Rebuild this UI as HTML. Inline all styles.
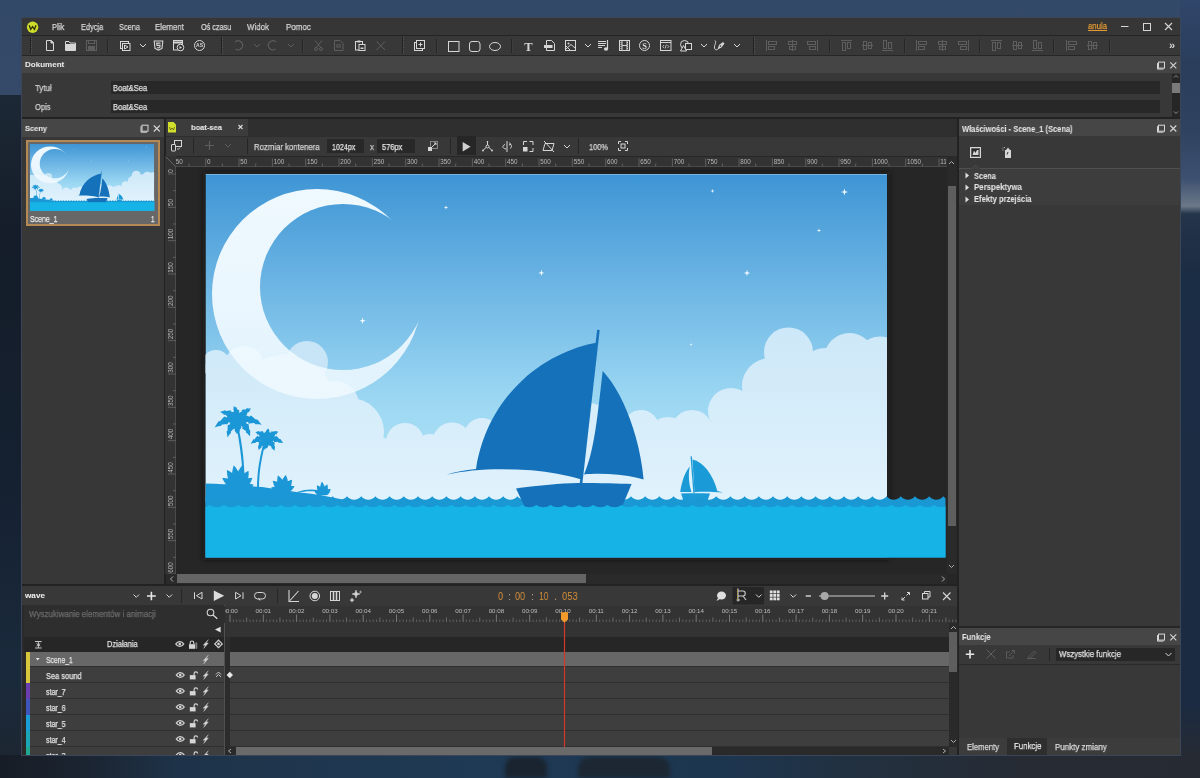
<!DOCTYPE html>
<html><head><meta charset="utf-8">
<style>
*{margin:0;padding:0;box-sizing:border-box}
html,body{width:1200px;height:778px;overflow:hidden}
body{position:relative;font-family:"Liberation Sans",sans-serif;font-size:8px;color:#d6d6d6;
background:linear-gradient(180deg,#2f4a6e 0%,#2a4163 20%,#1d2d42 40%,#172536 70%,#1b2a3c 100%)}
.a{position:absolute}
.t{position:absolute;white-space:nowrap;line-height:10px;will-change:transform;transform-origin:0 0;-webkit-text-stroke:0.25px currentColor}
.b{font-weight:bold}
svg{position:absolute;overflow:visible;will-change:transform}
</style></head><body>

<!-- desktop bg -->
<div class="a" style="left:0;top:0;width:1200px;height:778px;background:linear-gradient(180deg,#334968 0%,#354a69 12%,#2d405c 25%,#1e3048 40%,#1b2c42 100%)"></div>
<div class="a" style="left:0;top:95px;width:22px;height:683px;background:linear-gradient(180deg,#1d2836 0%,#141d29 20%,#152030 55%,#1a2a3c 85%,#1e2530 100%)"></div>
<div class="a" style="left:1180px;top:0;width:20px;height:778px;background:linear-gradient(180deg,#30466a 0%,#2a3e5c 8%,#2f4360 17%,#3e5070 23%,#5e6d82 25.5%,#6a7888 26.5%,#243449 27.5%,#1b2d44 35%,#1a2b42 90%,#262a34 97%)"></div>
<div class="a" style="left:0;top:755px;width:1200px;height:23px;background:linear-gradient(90deg,#171d26 0%,#1b2431 7%,#1e3349 15%,#1f3a55 40%,#1d3650 60%,#22303f 72%,#262b34 85%,#252a33 100%)"></div>
<div class="a" style="left:505px;top:757px;width:42px;height:21px;background:#1a2430;border-radius:10px 10px 0 0;filter:blur(2px)"></div>
<div class="a" style="left:578px;top:757px;width:92px;height:21px;background:#1c2733;border-radius:12px 12px 0 0;filter:blur(2px)"></div>
<!-- window frame -->
<div class="a" style="left:21px;top:17px;width:1160px;height:739px;background:#3a4658"></div>
<div class="a" style="left:22px;top:18px;width:1158px;height:737px;background:#222"></div>
<!-- menubar -->
<div class="a" style="left:22px;top:18px;width:1158px;height:17px;background:#363636"></div>
<div class="a" style="left:22px;top:35px;width:1158px;height:1px;background:#242424"></div>
<!-- toolbar -->
<div class="a" style="left:22px;top:36px;width:1158px;height:20px;background:#383838"></div>

<div class="a" style="left:22px;top:55px;width:1158px;height:1px;background:#262626"></div>
<!-- Dokument panel -->
<div class="a" style="left:22px;top:56px;width:1158px;height:17px;background:#454545"></div>
<div class="a" style="left:22px;top:73px;width:1158px;height:44px;background:#383838"></div>

<!-- Sceny panel -->
<div class="a" style="left:22px;top:119px;width:142px;height:18px;background:#464646"></div>
<div class="a" style="left:22px;top:137px;width:142px;height:447px;background:#373737"></div>

<!-- center doc -->
<div class="a" style="left:166px;top:119px;width:791px;height:17px;background:#2f2f2f"></div>
<div class="a" style="left:166px;top:136px;width:791px;height:20px;background:#383838"></div>
<div class="a" style="left:166px;top:156px;width:791px;height:428px;background:#262626"></div>

<!-- right panel -->
<div class="a" style="left:959px;top:119px;width:221px;height:17px;background:#464646"></div>
<div class="a" style="left:959px;top:136px;width:221px;height:490px;background:#383838"></div>
<div class="a" style="left:959px;top:628px;width:221px;height:17px;background:#464646"></div>
<div class="a" style="left:959px;top:645px;width:221px;height:110px;background:#383838"></div>

<!-- timeline -->
<div class="a" style="left:22px;top:586px;width:935px;height:20px;background:#383838"></div>
<div class="a" style="left:22px;top:606px;width:935px;height:149px;background:#373737"></div>


<!-- menu text -->
<!-- Dokument -->
<div class="a" style="left:111px;top:81px;width:1049px;height:13px;background:#282828"></div>
<div class="a" style="left:111px;top:100px;width:1049px;height:13px;background:#282828"></div>
<div class="a" style="left:1172px;top:74px;width:8px;height:43px;background:#262626"></div>
<div class="a" style="left:1172px;top:83px;width:8px;height:10px;background:#7a7a7a"></div>
<!-- Sceny -->
<!-- Wlasciwosci -->

<!-- toolbar icons -->
<svg class="a" style="left:0;top:0" width="1200" height="778" viewBox="0 0 1200 778"><line x1="30.5" y1="37" x2="30.5" y2="54" stroke="#222"/><line x1="31.5" y1="37" x2="31.5" y2="54" stroke="#555" stroke-dasharray="1 1"/><g transform="translate(46,40)"><path d="M0.5,0.5 H5.5 L7.5,2.5 V10.5 H0.5 Z" fill="none" stroke="#d6d6d6"/><path d="M5,0.5 V3 H7.5" fill="#d6d6d6" stroke="#d6d6d6"/></g><g transform="translate(65,41)"><path d="M0.5,0.5 H4 L5,2 H10.5 V9.5 H0.5 Z" fill="none" stroke="#d6d6d6"/><rect x="1" y="3" width="9.5" height="6.5" fill="#d6d6d6"/></g><g transform="translate(86,40)"><rect x="0.5" y="0.5" width="10" height="10" fill="none" stroke="#5e5e5e"/><rect x="2.5" y="0.5" width="6" height="3" fill="none" stroke="#5e5e5e"/><rect x="2" y="6" width="7" height="4.5" fill="#5e5e5e"/></g><line x1="107.5" y1="39" x2="107.5" y2="53" stroke="#262626"/><line x1="108.5" y1="39" x2="108.5" y2="53" stroke="#3d3d3d"/><g transform="translate(120,41)"><rect x="0.5" y="0.5" width="8" height="7" fill="none" stroke="#d6d6d6"/><rect x="2.5" y="2.5" width="7.5" height="7" fill="#333" stroke="#d6d6d6"/><path d="M4.5,4 L8,6 L4.5,8 Z" fill="none" stroke="#d6d6d6"/></g><polyline points="140,44 143,47 146,44" fill="none" stroke="#d6d6d6" stroke-width="1"/><g transform="translate(153.5,40.5)"><path d="M0.7,0.5 H9.3 L8.5,8 L5,9.6 L1.5,8 Z" fill="none" stroke="#d6d6d6" stroke-width="1.1"/><path d="M7,2.6 H3.2 L3.5,4.9 H6.6 L6.3,6.9 L5,7.4 L3.7,6.9" fill="none" stroke="#d6d6d6" stroke-width="1.1"/></g><g transform="translate(173,40)"><rect x="0.5" y="0.5" width="9" height="9.5" fill="none" stroke="#d6d6d6"/><line x1="0.5" y1="2.5" x2="9.5" y2="2.5" stroke="#d6d6d6" stroke-width="2"/><circle cx="7.5" cy="7.5" r="3.3" fill="#333" stroke="#d6d6d6"/><path d="M6.5,6 L9,7.5 L6.5,9 Z" fill="#d6d6d6"/></g><g transform="translate(194,40)"><circle cx="5.5" cy="5.5" r="5" fill="none" stroke="#d6d6d6"/><text x="5.5" y="7.3" font-size="5" font-weight="bold" fill="#d6d6d6" text-anchor="middle" font-family="Liberation Sans">AS</text></g><line x1="221.5" y1="37" x2="221.5" y2="54" stroke="#222"/><line x1="222.5" y1="37" x2="222.5" y2="54" stroke="#555" stroke-dasharray="1 1"/><g transform="translate(233,40)"><path d="M2,2 A4.5,4.5 0 1 1 2.5,9" fill="none" stroke="#5e5e5e" stroke-width="1.1"/></g><polyline points="254,44 257,47 260,44" fill="none" stroke="#5e5e5e" stroke-width="1"/><g transform="translate(267,40)"><path d="M9,2 A4.5,4.5 0 1 0 8.5,9" fill="none" stroke="#5e5e5e" stroke-width="1.1"/></g><polyline points="288,44 291,47 294,44" fill="none" stroke="#5e5e5e" stroke-width="1"/><line x1="302.5" y1="39" x2="302.5" y2="53" stroke="#262626"/><line x1="303.5" y1="39" x2="303.5" y2="53" stroke="#3d3d3d"/><g transform="translate(314,40)"><path d="M1,0.5 L7,8 M8,0.5 L2,8" stroke="#5e5e5e" fill="none"/><circle cx="2" cy="9" r="1.5" fill="none" stroke="#5e5e5e"/><circle cx="7" cy="9" r="1.5" fill="none" stroke="#5e5e5e"/></g><g transform="translate(334,40)"><path d="M0.5,0.5 H6 L9,3.5 V10.5 H0.5 Z" fill="none" stroke="#5e5e5e"/><path d="M2,5 H7 M2,7 H7" stroke="#5e5e5e"/></g><g transform="translate(355,40)"><rect x="0.5" y="1.5" width="7" height="8.5" fill="none" stroke="#d6d6d6"/><rect x="2.5" y="0.5" width="3" height="2" fill="#d6d6d6"/><rect x="4" y="4.5" width="6" height="6" fill="#333" stroke="#d6d6d6"/><rect x="5.5" y="7.5" width="3" height="1.5" fill="#d6d6d6"/></g><g transform="translate(376,41)"><path d="M0.5,0.5 L9,9 M9,0.5 L0.5,9" stroke="#5e5e5e"/></g><line x1="402.5" y1="37" x2="402.5" y2="54" stroke="#222"/><line x1="403.5" y1="37" x2="403.5" y2="54" stroke="#555" stroke-dasharray="1 1"/><g transform="translate(414,40)"><rect x="0.5" y="2.5" width="8" height="8" fill="none" stroke="#d6d6d6"/><rect x="2.5" y="0.5" width="8" height="8" fill="#333" stroke="#d6d6d6"/><path d="M6.5,2.5 V6.5 M4.5,4.5 H8.5" stroke="#d6d6d6"/></g><line x1="436.5" y1="39" x2="436.5" y2="53" stroke="#262626"/><line x1="437.5" y1="39" x2="437.5" y2="53" stroke="#3d3d3d"/><g transform="translate(448,41)"><rect x="0.5" y="0.5" width="10.5" height="10" fill="none" stroke="#d6d6d6"/></g><g transform="translate(469,41)"><rect x="0.5" y="0.5" width="10.5" height="10" rx="2.5" fill="none" stroke="#d6d6d6"/></g><g transform="translate(489,42)"><ellipse cx="6" cy="4.5" rx="5.5" ry="4" fill="none" stroke="#d6d6d6"/></g><line x1="511.5" y1="39" x2="511.5" y2="53" stroke="#262626"/><line x1="512.5" y1="39" x2="512.5" y2="53" stroke="#3d3d3d"/><text x="528.5" y="51" font-size="12.5" font-family="Liberation Serif" font-weight="bold" fill="#d6d6d6" text-anchor="middle">T</text><g transform="translate(544,40)"><path d="M2.5,0.5 H7.5 L10.5,3.5 V10.5 H2.5 Z" fill="none" stroke="#d6d6d6"/><rect x="0" y="5" width="8.5" height="3" fill="#d6d6d6"/></g><g transform="translate(565,40)"><rect x="0.5" y="0.5" width="10" height="10" fill="none" stroke="#d6d6d6"/><circle cx="3.5" cy="3.5" r="1" fill="#d6d6d6"/><path d="M1,9 L6,4.5 L10,8 M1,6 L5,10" fill="none" stroke="#d6d6d6"/></g><polyline points="585,44 588,47 591,44" fill="none" stroke="#d6d6d6" stroke-width="1"/><g transform="translate(598,40)"><path d="M0,1.5 H8 M0,3.5 H8 M0,5.5 H7 M0,7.5 H4" stroke="#d6d6d6"/><path d="M9.5,0 V9" stroke="#d6d6d6" stroke-width="1.2"/><ellipse cx="8" cy="9" rx="2.2" ry="1.8" fill="#d6d6d6"/></g><g transform="translate(619,40)"><rect x="0.5" y="0.5" width="10" height="10" fill="none" stroke="#d6d6d6"/><path d="M3,0.5 V10.5 M8,0.5 V10.5 M3,5.5 H8" stroke="#d6d6d6"/><path d="M0.5,2.5 H3 M0.5,4.5 H3 M0.5,6.5 H3 M0.5,8.5 H3 M8,2.5 H10.5 M8,4.5 H10.5 M8,6.5 H10.5 M8,8.5 H10.5" stroke="#d6d6d6" stroke-dasharray="1 1"/></g><g transform="translate(639,40)"><circle cx="5.5" cy="5.5" r="5" fill="none" stroke="#d6d6d6"/><text x="5.5" y="8.6" font-size="8.5" font-weight="bold" font-family="Liberation Serif" fill="#d6d6d6" text-anchor="middle">S</text></g><g transform="translate(660,40)"><rect x="0.5" y="0.5" width="10.5" height="10" fill="none" stroke="#d6d6d6"/><path d="M0.5,2.5 H11" stroke="#d6d6d6"/><path d="M4,5 L2.7,6.5 L4,8 M7.5,5 L8.8,6.5 L7.5,8 M6.3,4.5 L5.2,8.5" fill="none" stroke="#d6d6d6" stroke-width="0.8"/></g><g transform="translate(680,40)"><circle cx="4.5" cy="4.5" r="4" fill="none" stroke="#d6d6d6"/><rect x="5.5" y="3.5" width="6" height="6" fill="#333" stroke="#d6d6d6"/><path d="M0.5,11 L3.5,5.5 L6.5,11 Z" fill="#333" stroke="#d6d6d6"/></g><polyline points="701,44 704,47 707,44" fill="none" stroke="#d6d6d6" stroke-width="1"/><g transform="translate(713,40)"><path d="M2,0.5 C4,2 1,5 1.5,8 C2,10.5 4,10 5,9" fill="none" stroke="#d6d6d6"/><path d="M4.5,9.5 L6,5 L10,2 L11.5,3.5 L8.5,7.5 Z" fill="#d6d6d6"/><circle cx="7.5" cy="6" r="0.8" fill="#333"/></g><polyline points="734,44 737,47 740,44" fill="none" stroke="#d6d6d6" stroke-width="1"/><line x1="753.5" y1="37" x2="753.5" y2="54" stroke="#222"/><line x1="754.5" y1="37" x2="754.5" y2="54" stroke="#555" stroke-dasharray="1 1"/><g transform="translate(766,40)"><path d="M0.5,0 V11" stroke="#5e5e5e"/><rect x="2.5" y="1.5" width="8" height="3" fill="none" stroke="#5e5e5e"/><rect x="2.5" y="6.5" width="6" height="3" fill="none" stroke="#5e5e5e"/></g><g transform="translate(787,40)"><path d="M5.5,0 V11" stroke="#5e5e5e"/><rect x="1.5" y="1.5" width="8" height="3" fill="none" stroke="#5e5e5e"/><rect x="2.5" y="6.5" width="6" height="3" fill="none" stroke="#5e5e5e"/></g><g transform="translate(807,40)"><path d="M10.5,0 V11" stroke="#5e5e5e"/><rect x="0.5" y="1.5" width="8" height="3" fill="none" stroke="#5e5e5e"/><rect x="2.5" y="6.5" width="6" height="3" fill="none" stroke="#5e5e5e"/></g><line x1="829.5" y1="39" x2="829.5" y2="53" stroke="#262626"/><line x1="830.5" y1="39" x2="830.5" y2="53" stroke="#3d3d3d"/><g transform="translate(841,40)"><path d="M0,0.5 H11" stroke="#5e5e5e"/><rect x="1.5" y="2.5" width="3" height="8" fill="none" stroke="#5e5e5e"/><rect x="6.5" y="2.5" width="3" height="6" fill="none" stroke="#5e5e5e"/></g><g transform="translate(862,40)"><path d="M0,5.5 H11" stroke="#5e5e5e"/><rect x="1.5" y="1.5" width="3" height="8" fill="none" stroke="#5e5e5e"/><rect x="6.5" y="2.5" width="3" height="6" fill="none" stroke="#5e5e5e"/></g><g transform="translate(882,40)"><path d="M0,10.5 H11" stroke="#5e5e5e"/><rect x="1.5" y="0.5" width="3" height="8" fill="none" stroke="#5e5e5e"/><rect x="6.5" y="2.5" width="3" height="6" fill="none" stroke="#5e5e5e"/></g><line x1="904.5" y1="39" x2="904.5" y2="53" stroke="#262626"/><line x1="905.5" y1="39" x2="905.5" y2="53" stroke="#3d3d3d"/><g transform="translate(916,40)"><path d="M0.5,0 V11" stroke="#5e5e5e"/><rect x="2.5" y="1.5" width="8" height="3" fill="none" stroke="#5e5e5e"/><rect x="2.5" y="6.5" width="6" height="3" fill="none" stroke="#5e5e5e"/></g><g transform="translate(937,40)"><path d="M5.5,0 V11" stroke="#5e5e5e"/><rect x="1.5" y="1.5" width="8" height="3" fill="none" stroke="#5e5e5e"/><rect x="2.5" y="6.5" width="6" height="3" fill="none" stroke="#5e5e5e"/></g><g transform="translate(958,40)"><path d="M10.5,0 V11" stroke="#5e5e5e"/><rect x="0.5" y="1.5" width="8" height="3" fill="none" stroke="#5e5e5e"/><rect x="2.5" y="6.5" width="6" height="3" fill="none" stroke="#5e5e5e"/></g><line x1="979.5" y1="39" x2="979.5" y2="53" stroke="#262626"/><line x1="980.5" y1="39" x2="980.5" y2="53" stroke="#3d3d3d"/><g transform="translate(991,40)"><path d="M0,0.5 H11" stroke="#5e5e5e"/><rect x="1.5" y="2.5" width="3" height="8" fill="none" stroke="#5e5e5e"/><rect x="6.5" y="2.5" width="3" height="6" fill="none" stroke="#5e5e5e"/></g><g transform="translate(1012,40)"><path d="M0,5.5 H11" stroke="#5e5e5e"/><rect x="1.5" y="1.5" width="3" height="8" fill="none" stroke="#5e5e5e"/><rect x="6.5" y="2.5" width="3" height="6" fill="none" stroke="#5e5e5e"/></g><g transform="translate(1032,40)"><path d="M0,10.5 H11" stroke="#5e5e5e"/><rect x="1.5" y="0.5" width="3" height="8" fill="none" stroke="#5e5e5e"/><rect x="6.5" y="2.5" width="3" height="6" fill="none" stroke="#5e5e5e"/></g><line x1="1053.5" y1="39" x2="1053.5" y2="53" stroke="#262626"/><line x1="1054.5" y1="39" x2="1054.5" y2="53" stroke="#3d3d3d"/><g transform="translate(1066,40)"><path d="M0.5,0 V11" stroke="#5e5e5e"/><rect x="2.5" y="1.5" width="8" height="3" fill="none" stroke="#5e5e5e"/><rect x="2.5" y="6.5" width="6" height="3" fill="none" stroke="#5e5e5e"/></g><g transform="translate(1087,40)"><path d="M0,5.5 H11" stroke="#5e5e5e"/><rect x="1.5" y="1.5" width="3" height="8" fill="none" stroke="#5e5e5e"/><rect x="6.5" y="2.5" width="3" height="6" fill="none" stroke="#5e5e5e"/></g><line x1="1109.5" y1="39" x2="1109.5" y2="53" stroke="#262626"/><line x1="1110.5" y1="39" x2="1110.5" y2="53" stroke="#3d3d3d"/><text x="1169" y="49" font-size="11" font-weight="bold" fill="#d6d6d6" font-family="Liberation Sans">»</text><circle cx="32.6" cy="27.2" r="5.7" fill="#cfdd2b"/><path d="M29.2,25.2 L30.7,29.3 L32.6,26.6 L34.5,29.3 L36,25.2" fill="none" stroke="#2e300c" stroke-width="1.3"/><path d="M1121,26.5 H1128.5" stroke="#d6d6d6"/><rect x="1143.5" y="23.5" width="7" height="7" fill="none" stroke="#d6d6d6"/><path d="M1165,23 L1172,30 M1172,23 L1165,30" stroke="#d6d6d6" stroke-width="1.1"/></svg>

<svg class="a" style="left:0;top:0" width="1200" height="778" viewBox="0 0 1200 778"><defs>
<linearGradient id="sky" x1="0" y1="174" x2="0" y2="450" gradientUnits="userSpaceOnUse">
<stop offset="0" stop-color="#3e95d4"/><stop offset="0.4" stop-color="#6cb5e4"/><stop offset="0.8" stop-color="#9ad6f2"/><stop offset="1" stop-color="#aadff5"/></linearGradient>
<linearGradient id="cloud" x1="0" y1="330" x2="0" y2="500" gradientUnits="userSpaceOnUse">
<stop offset="0" stop-color="#cde8f8"/><stop offset="1" stop-color="#e0f2fc"/></linearGradient>
<linearGradient id="moongrad" x1="0" y1="189" x2="0" y2="399" gradientUnits="userSpaceOnUse"><stop offset="0" stop-color="#f3fbff" stop-opacity="0.98"/><stop offset="0.55" stop-color="#f2faff" stop-opacity="0.94"/><stop offset="1" stop-color="#f0f9ff" stop-opacity="0.82"/></linearGradient>
<mask id="moonmask" maskUnits="userSpaceOnUse" x="150" y="150" width="350" height="300"><rect x="150" y="150" width="350" height="300" fill="#fff"/><circle cx="343" cy="287" r="83" fill="#000"/></mask>
<filter id="canvshadow" x="-5%" y="-5%" width="110%" height="110%"><feGaussianBlur stdDeviation="2.5"/></filter>
<clipPath id="canv"><rect x="205.5" y="174" width="681.5" height="383.5"/></clipPath>
<clipPath id="work"><rect x="176" y="167" width="771" height="407"/></clipPath>
<clipPath id="sceneclip"><rect x="205.5" y="174" width="681.5" height="383.5"/><rect x="205.5" y="480" width="740" height="77.5"/></clipPath>
</defs><rect x="203" y="172" width="686.5" height="388" fill="#151515" fill-opacity="0.6" filter="url(#canvshadow)"/><g id="scene" clip-path="url(#sceneclip)"><rect x="205.5" y="174" width="681.5" height="383.5" fill="url(#sky)"/><rect x="205.5" y="174" width="681.5" height="1" fill="#ffffff" fill-opacity="0.3"/><path d="M446,205.3 L446.484,207.016 L448.2,207.5 L446.484,207.984 L446,209.7 L445.516,207.984 L443.8,207.5 L445.516,207.016 Z" fill="#f4fbff"/><path d="M541.4,269.7 L542.1039999999999,272.19599999999997 L544.6,272.9 L542.1039999999999,273.604 L541.4,276.09999999999997 L540.696,273.604 L538.1999999999999,272.9 L540.696,272.19599999999997 Z" fill="#f4fbff"/><path d="M362.6,317.6 L363.30400000000003,320.096 L365.8,320.8 L363.30400000000003,321.504 L362.6,324.0 L361.896,321.504 L359.40000000000003,320.8 L361.896,320.096 Z" fill="#f4fbff"/><path d="M712.5,189 L712.94,190.56 L714.5,191 L712.94,191.44 L712.5,193 L712.06,191.44 L710.5,191 L712.06,190.56 Z" fill="#f4fbff"/><path d="M844.5,188.4 L845.292,191.208 L848.1,192 L845.292,192.792 L844.5,195.6 L843.708,192.792 L840.9,192 L843.708,191.208 Z" fill="#f4fbff"/><path d="M819,228.4 L819.484,230.11599999999999 L821.2,230.6 L819.484,231.084 L819,232.79999999999998 L818.516,231.084 L816.8,230.6 L818.516,230.11599999999999 Z" fill="#f4fbff"/><path d="M747,269.8 L747.704,272.296 L750.2,273 L747.704,273.704 L747,276.2 L746.296,273.704 L743.8,273 L746.296,272.296 Z" fill="#f4fbff"/><path d="M691,343.0 L691.352,344.24800000000005 L692.6,344.6 L691.352,344.952 L691,346.20000000000005 L690.648,344.952 L689.4,344.6 L690.648,344.24800000000005 Z" fill="#f4fbff"/><g fill="#c8e5f7"><circle cx="307" cy="362" r="21"/><circle cx="285" cy="372" r="18"/></g><g fill="url(#cloud)"><circle cx="216" cy="364" r="14"/><circle cx="244" cy="366" r="20"/><circle cx="275" cy="378" r="22"/><circle cx="305" cy="388" r="24"/><circle cx="335" cy="405" r="24"/><circle cx="350" cy="432" r="34"/><circle cx="405" cy="442" r="19"/><circle cx="430" cy="450" r="16"/><circle cx="452" cy="442" r="19.5"/><circle cx="482" cy="436" r="18"/><circle cx="530" cy="440" r="22"/><circle cx="589" cy="426" r="23"/><circle cx="641" cy="428" r="18"/><circle cx="668" cy="438" r="21"/><circle cx="692" cy="431" r="21"/><circle cx="731" cy="411" r="23"/><circle cx="770" cy="386" r="28"/><circle cx="788.5" cy="352" r="24.5"/><circle cx="825" cy="372" r="24"/><circle cx="849.5" cy="358.5" r="25.5"/><circle cx="880" cy="362" r="25.5"/><polygon points="216,364 244,366 275,378 305,388 335,405 350,432 405,442 430,450 452,442 482,436 530,440 589,426 641,428 668,438 692,431 731,411 770,386 788.5,352 825,372 849.5,358.5 880,362 887,362 887,502 205.5,502 205.5,364"/></g><circle cx="317" cy="294" r="105" fill="url(#moongrad)" mask="url(#moonmask)"/><path d="M205.5,483.4 C230,484 250,486 262,487 C275,489 290,491 300,492.6 C315,494 330,497 345,500 L345,505 L205.5,505 Z" fill="#1b96d6"/><path d="M237,420 C241,438 244,455 244.5,476 L242.5,476 C242,458 239,440 235.5,421 Z" fill="#1b96d6"/><path d="M266.5,440 C262,455 259,470 259,490 L257,490 C257,470 260,455 264.5,440 Z" fill="#1b96d6"/><path d="M238.0,419.0 L237.1,417.9 L236.2,417.3 L235.1,416.9 L234.1,416.8 L233.0,416.8 L231.7,415.3 L230.6,415.4 L229.4,415.8 L228.4,416.3 L227.3,416.8 L226.3,417.5 L224.6,416.4 L223.6,417.3 L222.7,418.2 L221.8,419.2 L220.9,420.3 L220.0,421.3 L218.5,421.3 L217.7,422.5 L216.9,423.8 L216.1,425.0 L215.4,426.2 L214.6,427.4 L213.5,428.3 L213.5,428.3 L214.6,427.4 L215.9,426.9 L217.2,426.5 L218.6,426.2 L219.9,425.9 L221.2,425.8 L221.9,424.6 L223.1,424.4 L224.3,424.3 L225.4,424.2 L226.5,424.2 L227.6,424.2 L228.0,422.5 L229.0,422.5 L230.0,422.5 L230.9,422.5 L231.8,422.5 L232.6,422.3 L233.3,420.8 L234.2,420.7 L235.1,420.5 L236.0,420.2 L237.0,419.8 L238.0,419.0ZM238.0,419.0 L237.9,417.8 L237.6,416.9 L237.1,416.1 L236.5,415.5 L235.8,415.0 L235.8,413.3 L235.0,412.8 L234.2,412.5 L233.3,412.3 L232.4,412.1 L231.4,412.1 L231.1,410.4 L230.1,410.4 L229.0,410.6 L228.0,410.7 L227.0,410.9 L226.0,411.1 L225.2,410.2 L224.2,410.6 L223.1,411.0 L222.1,411.3 L221.1,411.6 L220.1,412.0 L219.2,411.9 L219.2,411.9 L220.1,412.0 L221.0,412.5 L221.9,413.0 L222.7,413.6 L223.5,414.3 L224.2,414.9 L225.2,414.5 L225.9,415.1 L226.5,415.7 L227.2,416.4 L227.8,417.0 L228.4,417.6 L229.6,416.6 L230.1,417.2 L230.7,417.7 L231.3,418.2 L231.9,418.6 L232.5,419.0 L233.9,418.2 L234.5,418.5 L235.2,418.8 L236.0,419.0 L236.9,419.1 L238.0,419.0ZM238.0,419.0 L238.7,418.3 L239.0,417.6 L239.1,417.0 L239.2,416.3 L239.1,415.7 L240.2,414.8 L240.0,414.2 L239.8,413.7 L239.4,413.1 L239.0,412.6 L238.6,412.1 L239.6,411.1 L239.1,410.6 L238.5,410.1 L237.9,409.7 L237.3,409.2 L236.7,408.8 L237.1,408.0 L236.4,407.6 L235.7,407.3 L235.0,406.9 L234.4,406.5 L233.8,406.1 L233.5,405.6 L233.5,405.6 L233.8,406.1 L233.7,406.8 L233.6,407.5 L233.5,408.2 L233.4,408.9 L233.2,409.6 L233.9,410.0 L233.8,410.6 L233.7,411.3 L233.5,411.9 L233.4,412.6 L233.2,413.2 L234.5,413.4 L234.4,414.0 L234.4,414.6 L234.4,415.2 L234.5,415.7 L234.6,416.3 L235.9,416.5 L236.1,417.0 L236.3,417.6 L236.7,418.1 L237.2,418.6 L238.0,419.0ZM238.0,419.0 L239.1,418.9 L239.9,418.7 L240.6,418.4 L241.1,417.9 L241.6,417.5 L243.1,418.0 L243.5,417.5 L243.9,417.0 L244.3,416.4 L244.6,415.8 L244.9,415.1 L246.3,415.8 L246.6,415.1 L246.9,414.4 L247.2,413.6 L247.5,412.8 L247.9,412.1 L248.9,412.3 L249.3,411.4 L249.7,410.6 L250.1,409.8 L250.6,409.1 L251.2,408.3 L251.9,408.0 L251.9,408.0 L251.2,408.3 L250.3,408.4 L249.4,408.4 L248.4,408.4 L247.5,408.3 L246.5,408.3 L246.2,409.3 L245.3,409.4 L244.4,409.5 L243.5,409.6 L242.6,409.8 L241.7,410.0 L241.9,411.5 L241.2,411.8 L240.4,412.2 L239.7,412.6 L239.1,413.1 L238.5,413.6 L239.0,415.1 L238.5,415.7 L238.1,416.4 L237.9,417.1 L237.8,418.0 L238.0,419.0ZM238.0,419.0 L239.1,419.8 L240.1,420.2 L241.0,420.4 L241.9,420.6 L242.8,420.6 L243.6,422.3 L244.5,422.3 L245.4,422.3 L246.3,422.2 L247.2,422.0 L248.2,421.9 L248.7,423.7 L249.8,423.5 L250.9,423.3 L252.0,423.2 L253.2,423.1 L254.4,423.1 L255.1,424.2 L256.4,424.2 L257.7,424.2 L259.0,424.3 L260.4,424.5 L261.8,424.7 L262.9,425.5 L262.9,425.5 L261.8,424.7 L260.8,423.7 L259.9,422.7 L259.1,421.6 L258.2,420.6 L257.3,419.5 L255.8,419.6 L254.9,418.8 L253.9,417.9 L252.9,417.1 L251.9,416.3 L250.8,415.6 L249.4,416.7 L248.3,416.2 L247.2,415.7 L246.1,415.4 L245.0,415.2 L243.9,415.1 L242.8,416.6 L241.7,416.7 L240.7,416.9 L239.7,417.3 L238.8,418.0 L238.0,419.0ZM238.0,419.0 L238.2,420.2 L238.6,421.0 L239.0,421.8 L239.5,422.4 L240.1,422.9 L239.6,424.5 L240.1,425.0 L240.7,425.5 L241.4,426.0 L242.0,426.4 L242.8,426.9 L242.0,428.4 L242.8,428.9 L243.6,429.4 L244.5,429.9 L245.3,430.5 L246.1,431.2 L245.8,432.4 L246.8,433.1 L247.6,433.8 L248.5,434.7 L249.3,435.6 L250.0,436.5 L250.3,437.7 L250.3,437.7 L250.0,436.5 L250.1,435.3 L250.1,434.1 L250.2,432.9 L250.2,431.7 L250.3,430.5 L249.2,429.7 L249.2,428.6 L249.0,427.5 L248.9,426.4 L248.7,425.2 L248.5,424.1 L246.8,424.1 L246.4,423.1 L246.0,422.2 L245.5,421.3 L244.9,420.5 L244.2,419.8 L242.6,420.1 L241.8,419.6 L241.0,419.1 L240.1,418.9 L239.1,418.8 L238.0,419.0ZM238.0,419.0 L237.4,419.8 L237.1,420.5 L237.0,421.1 L236.9,421.7 L237.0,422.3 L235.8,423.0 L235.8,423.5 L235.9,424.1 L236.1,424.6 L236.3,425.2 L236.6,425.8 L235.3,426.3 L235.6,426.9 L235.9,427.6 L236.2,428.2 L236.5,428.9 L236.7,429.6 L236.0,430.2 L236.3,430.9 L236.6,431.7 L236.8,432.5 L236.9,433.3 L237.1,434.1 L236.8,434.8 L236.8,434.8 L237.1,434.1 L237.6,433.5 L238.2,432.9 L238.7,432.3 L239.3,431.7 L239.9,431.0 L239.5,430.2 L240.0,429.6 L240.5,428.9 L240.9,428.2 L241.3,427.5 L241.7,426.8 L240.6,426.0 L240.9,425.3 L241.1,424.6 L241.2,423.9 L241.3,423.2 L241.2,422.5 L240.0,421.9 L239.9,421.2 L239.7,420.6 L239.3,420.0 L238.8,419.5 L238.0,419.0ZM238.0,419.0 L237.1,419.4 L236.5,419.8 L236.0,420.4 L235.7,421.0 L235.5,421.6 L234.1,422.0 L234.0,422.7 L234.0,423.4 L234.1,424.2 L234.2,424.9 L234.4,425.6 L233.1,426.2 L233.4,427.0 L233.8,427.7 L234.2,428.4 L234.6,429.1 L235.0,429.8 L234.4,430.6 L235.0,431.3 L235.5,432.0 L236.0,432.6 L236.5,433.3 L237.0,433.9 L237.1,434.6 L237.1,434.6 L237.0,433.9 L237.2,433.2 L237.4,432.4 L237.7,431.7 L238.1,431.0 L238.4,430.3 L237.8,429.7 L238.2,429.0 L238.5,428.4 L238.8,427.8 L239.2,427.2 L239.5,426.6 L238.5,425.9 L238.8,425.4 L239.0,424.8 L239.2,424.2 L239.4,423.7 L239.5,423.1 L238.5,422.3 L238.6,421.7 L238.7,421.1 L238.6,420.5 L238.4,419.8 L238.0,419.0ZM238.0,419.0 L236.8,418.8 L235.8,419.0 L234.9,419.3 L234.2,419.8 L233.5,420.5 L231.8,420.2 L231.1,421.0 L230.6,421.8 L230.2,422.7 L229.8,423.7 L229.6,424.7 L227.8,424.9 L227.7,426.1 L227.6,427.2 L227.6,428.3 L227.6,429.5 L227.6,430.6 L226.6,431.5 L226.8,432.7 L227.0,433.9 L227.2,435.1 L227.4,436.3 L227.6,437.5 L227.4,438.7 L227.4,438.7 L227.6,437.5 L228.2,436.5 L228.8,435.5 L229.5,434.6 L230.2,433.7 L231.0,432.9 L230.7,431.8 L231.5,431.0 L232.2,430.3 L232.9,429.6 L233.6,429.0 L234.3,428.5 L233.6,427.1 L234.3,426.5 L234.9,426.0 L235.5,425.5 L236.0,424.9 L236.5,424.3 L236.1,422.9 L236.6,422.3 L237.0,421.7 L237.4,420.9 L237.8,420.1 L238.0,419.0ZM267.0,438.0 L266.4,437.1 L265.7,436.7 L265.0,436.4 L264.3,436.2 L263.5,436.2 L262.6,435.0 L261.8,435.1 L261.0,435.4 L260.2,435.7 L259.5,436.2 L258.8,436.7 L257.5,435.7 L256.8,436.4 L256.2,437.1 L255.6,437.9 L255.0,438.6 L254.4,439.4 L253.3,439.3 L252.8,440.3 L252.2,441.2 L251.7,442.1 L251.2,443.0 L250.7,443.9 L249.9,444.5 L249.9,444.5 L250.7,443.9 L251.7,443.6 L252.6,443.3 L253.6,443.1 L254.5,443.0 L255.5,442.9 L255.9,442.0 L256.7,442.0 L257.6,441.9 L258.4,442.0 L259.2,442.0 L259.9,442.1 L260.1,440.7 L260.8,440.8 L261.5,440.8 L262.1,440.8 L262.7,440.8 L263.3,440.7 L263.8,439.4 L264.4,439.4 L265.0,439.2 L265.6,439.0 L266.3,438.6 L267.0,438.0ZM267.0,438.0 L267.1,437.1 L267.0,436.4 L266.7,435.8 L266.4,435.3 L265.9,434.9 L266.2,433.5 L265.6,433.2 L265.1,432.9 L264.4,432.7 L263.8,432.6 L263.1,432.5 L263.1,431.2 L262.3,431.2 L261.6,431.3 L260.8,431.4 L260.1,431.5 L259.4,431.7 L258.9,430.9 L258.2,431.2 L257.4,431.4 L256.7,431.7 L255.9,431.9 L255.2,432.1 L254.6,432.0 L254.6,432.0 L255.2,432.1 L255.8,432.6 L256.3,433.1 L256.8,433.6 L257.3,434.2 L257.7,434.7 L258.4,434.4 L258.9,434.9 L259.3,435.4 L259.6,435.9 L260.0,436.5 L260.3,437.0 L261.2,436.2 L261.6,436.6 L261.9,437.0 L262.3,437.4 L262.6,437.8 L263.0,438.0 L264.1,437.4 L264.5,437.7 L265.0,437.9 L265.5,438.0 L266.2,438.1 L267.0,438.0ZM267.0,438.0 L267.7,437.6 L268.1,437.2 L268.3,436.8 L268.5,436.4 L268.5,436.0 L269.7,435.7 L269.7,435.3 L269.7,434.9 L269.6,434.5 L269.4,434.1 L269.2,433.7 L270.4,433.5 L270.1,433.0 L269.9,432.6 L269.6,432.1 L269.3,431.7 L269.1,431.2 L269.7,430.9 L269.4,430.4 L269.1,429.9 L268.8,429.4 L268.6,428.9 L268.4,428.4 L268.5,428.0 L268.5,428.0 L268.4,428.4 L268.0,428.8 L267.6,429.1 L267.1,429.4 L266.7,429.8 L266.2,430.1 L266.6,430.7 L266.2,431.0 L265.8,431.4 L265.4,431.8 L265.0,432.2 L264.7,432.6 L265.6,433.2 L265.3,433.6 L265.1,434.0 L264.9,434.4 L264.8,434.9 L264.8,435.3 L265.7,435.8 L265.8,436.3 L265.9,436.7 L266.1,437.1 L266.4,437.6 L267.0,438.0ZM267.0,438.0 L267.9,438.2 L268.6,438.1 L269.1,438.0 L269.6,437.8 L270.0,437.5 L271.2,438.2 L271.6,437.9 L271.9,437.6 L272.2,437.2 L272.6,436.7 L272.9,436.2 L273.9,437.1 L274.2,436.5 L274.5,436.0 L274.8,435.4 L275.1,434.8 L275.5,434.3 L276.2,434.6 L276.6,434.0 L276.9,433.4 L277.4,432.8 L277.8,432.2 L278.3,431.7 L279.0,431.6 L279.0,431.6 L278.3,431.7 L277.7,431.6 L277.0,431.4 L276.2,431.2 L275.5,431.1 L274.8,430.9 L274.4,431.6 L273.7,431.5 L273.0,431.5 L272.3,431.4 L271.5,431.4 L270.8,431.4 L270.8,432.7 L270.2,432.8 L269.6,432.9 L269.0,433.2 L268.4,433.4 L267.9,433.8 L268.1,435.0 L267.7,435.4 L267.3,435.9 L267.1,436.5 L266.9,437.1 L267.0,438.0ZM267.0,438.0 L267.7,438.7 L268.4,439.1 L269.0,439.4 L269.6,439.5 L270.2,439.6 L270.7,441.0 L271.3,441.0 L271.9,441.0 L272.5,441.0 L273.2,440.9 L273.8,440.8 L274.1,442.2 L274.8,442.1 L275.6,442.0 L276.4,441.9 L277.2,441.8 L278.1,441.8 L278.4,442.7 L279.4,442.7 L280.3,442.7 L281.3,442.8 L282.2,442.9 L283.2,443.1 L284.0,443.7 L284.0,443.7 L283.2,443.1 L282.7,442.3 L282.1,441.5 L281.6,440.7 L281.0,439.9 L280.5,439.0 L279.4,439.1 L278.8,438.4 L278.2,437.7 L277.6,437.1 L276.9,436.4 L276.2,435.8 L275.1,436.7 L274.4,436.2 L273.6,435.9 L272.9,435.5 L272.1,435.3 L271.3,435.2 L270.5,436.3 L269.7,436.4 L269.0,436.5 L268.3,436.8 L267.6,437.2 L267.0,438.0ZM267.0,438.0 L267.0,438.9 L267.2,439.6 L267.4,440.2 L267.7,440.6 L268.0,441.0 L267.4,442.3 L267.8,442.6 L268.1,443.0 L268.6,443.3 L269.0,443.6 L269.6,444.0 L268.7,445.1 L269.3,445.4 L269.9,445.8 L270.5,446.1 L271.1,446.6 L271.7,447.1 L271.3,447.9 L272.0,448.4 L272.6,449.0 L273.2,449.6 L273.8,450.3 L274.3,451.0 L274.5,451.8 L274.5,451.8 L274.3,451.0 L274.5,450.1 L274.6,449.3 L274.8,448.4 L275.0,447.5 L275.1,446.7 L274.4,446.1 L274.4,445.3 L274.5,444.5 L274.5,443.6 L274.5,442.8 L274.4,442.0 L273.1,441.9 L272.9,441.2 L272.7,440.5 L272.4,439.8 L272.0,439.2 L271.6,438.7 L270.3,438.9 L269.8,438.5 L269.2,438.1 L268.6,437.9 L267.9,437.8 L267.0,438.0ZM267.0,438.0 L266.4,438.5 L266.1,439.0 L265.9,439.5 L265.8,439.9 L265.8,440.4 L264.7,440.8 L264.8,441.2 L264.8,441.6 L265.0,442.0 L265.1,442.5 L265.3,442.9 L264.2,443.2 L264.4,443.7 L264.7,444.1 L265.0,444.6 L265.2,445.1 L265.4,445.7 L264.8,446.0 L265.1,446.6 L265.3,447.1 L265.5,447.7 L265.7,448.3 L265.8,448.9 L265.7,449.4 L265.7,449.4 L265.8,448.9 L266.3,448.5 L266.8,448.1 L267.2,447.7 L267.7,447.3 L268.2,446.9 L267.9,446.2 L268.3,445.8 L268.7,445.3 L269.1,444.9 L269.5,444.4 L269.8,443.9 L268.9,443.2 L269.1,442.7 L269.3,442.2 L269.5,441.7 L269.6,441.2 L269.5,440.7 L268.5,440.2 L268.5,439.7 L268.3,439.3 L268.0,438.8 L267.7,438.4 L267.0,438.0ZM267.0,438.0 L266.2,438.1 L265.6,438.4 L265.1,438.8 L264.8,439.2 L264.5,439.7 L263.3,439.8 L263.1,440.4 L263.0,441.0 L263.0,441.6 L263.0,442.2 L263.1,442.8 L261.9,443.2 L262.1,443.8 L262.4,444.5 L262.6,445.1 L262.9,445.7 L263.2,446.3 L262.6,446.9 L263.1,447.5 L263.5,448.1 L263.9,448.7 L264.2,449.3 L264.6,449.9 L264.6,450.5 L264.6,450.5 L264.6,449.9 L264.9,449.3 L265.2,448.7 L265.5,448.1 L265.9,447.6 L266.3,447.0 L265.8,446.5 L266.1,446.0 L266.5,445.5 L266.9,445.1 L267.2,444.6 L267.6,444.2 L266.7,443.6 L267.0,443.2 L267.3,442.8 L267.6,442.4 L267.8,441.9 L267.9,441.5 L267.1,440.7 L267.3,440.3 L267.4,439.8 L267.4,439.3 L267.3,438.7 L267.0,438.0ZM267.0,438.0 L266.1,437.7 L265.3,437.7 L264.7,437.8 L264.1,438.1 L263.5,438.5 L262.2,438.1 L261.7,438.6 L261.3,439.2 L260.9,439.8 L260.6,440.5 L260.4,441.2 L259.0,441.1 L258.9,442.0 L258.8,442.8 L258.8,443.7 L258.8,444.5 L258.8,445.4 L257.9,445.8 L258.1,446.7 L258.2,447.6 L258.4,448.5 L258.5,449.4 L258.6,450.3 L258.4,451.1 L258.4,451.1 L258.6,450.3 L259.1,449.6 L259.7,449.0 L260.3,448.4 L261.0,447.9 L261.6,447.4 L261.4,446.6 L262.0,446.1 L262.6,445.7 L263.2,445.3 L263.8,445.0 L264.4,444.7 L263.8,443.6 L264.3,443.3 L264.8,443.0 L265.2,442.7 L265.6,442.4 L266.0,442.0 L265.6,440.8 L266.0,440.4 L266.3,440.0 L266.6,439.5 L266.9,438.9 L267.0,438.0Z" fill="#1b96d6"/><path d="M238.0,489.0 L237.4,488.1 L236.8,487.4 L236.1,486.8 L235.4,486.3 L234.8,485.8 L234.1,485.4 L233.4,485.0 L232.7,484.7 L231.9,484.5 L231.2,484.3 L230.5,484.2 L229.7,484.1 L229.0,484.1 L228.2,484.1 L227.4,484.2 L226.7,484.3 L225.9,484.4 L225.1,484.6 L224.3,484.8 L223.5,485.0 L222.7,485.3 L221.8,485.6 L221.0,486.0 L220.3,485.9 L220.3,485.9 L221.0,486.0 L221.7,486.6 L222.3,487.1 L223.0,487.6 L223.7,488.1 L224.4,488.5 L225.1,488.9 L225.8,489.3 L226.5,489.7 L227.2,490.0 L227.9,490.2 L228.6,490.4 L229.3,490.6 L230.1,490.8 L230.8,490.8 L231.6,490.9 L232.3,490.8 L233.1,490.8 L233.9,490.7 L234.7,490.5 L235.5,490.3 L236.3,490.0 L237.1,489.6 L238.0,489.0ZM238.0,489.0 L237.8,487.8 L237.5,486.8 L237.1,485.9 L236.7,485.0 L236.3,484.2 L235.8,483.5 L235.2,482.8 L234.7,482.2 L234.0,481.6 L233.4,481.0 L232.7,480.6 L232.0,480.1 L231.2,479.8 L230.5,479.4 L229.7,479.1 L228.8,478.9 L228.0,478.6 L227.1,478.4 L226.2,478.3 L225.2,478.2 L224.3,478.1 L223.3,478.0 L222.3,478.0 L221.6,477.5 L221.6,477.5 L222.3,478.0 L222.7,478.9 L223.1,479.8 L223.5,480.6 L224.0,481.4 L224.5,482.1 L225.0,482.9 L225.5,483.6 L226.1,484.3 L226.6,484.9 L227.2,485.5 L227.8,486.1 L228.5,486.6 L229.2,487.1 L229.9,487.5 L230.6,487.9 L231.4,488.2 L232.2,488.5 L233.1,488.8 L234.0,489.0 L234.9,489.1 L235.8,489.2 L236.8,489.2 L238.0,489.0ZM238.0,489.0 L238.4,487.7 L238.5,486.5 L238.6,485.4 L238.5,484.3 L238.4,483.2 L238.3,482.2 L238.0,481.2 L237.7,480.3 L237.4,479.4 L236.9,478.5 L236.5,477.7 L235.9,476.9 L235.3,476.2 L234.7,475.4 L234.0,474.7 L233.3,474.0 L232.5,473.4 L231.7,472.7 L230.8,472.1 L229.9,471.5 L229.0,471.0 L228.0,470.4 L227.0,469.9 L226.5,469.1 L226.5,469.1 L227.0,469.9 L226.9,471.0 L227.0,472.1 L227.1,473.2 L227.2,474.2 L227.3,475.2 L227.5,476.3 L227.7,477.2 L227.9,478.2 L228.2,479.1 L228.6,480.1 L228.9,480.9 L229.4,481.8 L229.9,482.6 L230.4,483.4 L231.0,484.2 L231.6,484.9 L232.3,485.6 L233.1,486.3 L233.9,487.0 L234.8,487.6 L235.7,488.1 L236.7,488.6 L238.0,489.0ZM238.0,489.0 L238.8,487.8 L239.3,486.7 L239.7,485.5 L240.1,484.4 L240.3,483.3 L240.5,482.2 L240.6,481.1 L240.6,480.1 L240.5,479.0 L240.4,478.0 L240.3,477.0 L240.0,476.0 L239.7,475.0 L239.3,474.0 L238.9,473.0 L238.4,472.0 L237.9,471.0 L237.3,470.1 L236.7,469.1 L236.1,468.2 L235.4,467.2 L234.7,466.3 L233.8,465.4 L233.7,464.4 L233.7,464.4 L233.8,465.4 L233.4,466.5 L233.1,467.6 L232.8,468.8 L232.6,469.9 L232.4,470.9 L232.2,472.0 L232.1,473.1 L232.0,474.2 L232.0,475.3 L232.0,476.3 L232.1,477.4 L232.2,478.4 L232.4,479.4 L232.6,480.4 L232.9,481.4 L233.3,482.4 L233.7,483.4 L234.2,484.4 L234.8,485.3 L235.4,486.3 L236.1,487.2 L236.9,488.1 L238.0,489.0ZM238.0,489.0 L239.2,488.1 L240.1,487.2 L240.8,486.3 L241.5,485.4 L242.1,484.4 L242.6,483.5 L243.1,482.5 L243.5,481.5 L243.8,480.5 L244.1,479.5 L244.2,478.5 L244.3,477.4 L244.4,476.4 L244.4,475.3 L244.3,474.3 L244.2,473.2 L244.1,472.1 L243.9,471.0 L243.6,469.9 L243.3,468.8 L243.0,467.7 L242.6,466.5 L242.2,465.4 L242.3,464.4 L242.3,464.4 L242.2,465.4 L241.4,466.3 L240.7,467.3 L240.1,468.2 L239.5,469.2 L238.9,470.1 L238.4,471.1 L237.9,472.1 L237.5,473.0 L237.1,474.0 L236.7,475.0 L236.4,476.0 L236.2,477.0 L236.0,478.1 L235.9,479.1 L235.8,480.2 L235.8,481.2 L235.9,482.3 L236.0,483.4 L236.2,484.5 L236.5,485.6 L236.8,486.7 L237.3,487.8 L238.0,489.0ZM238.0,489.0 L239.3,488.7 L240.4,488.3 L241.4,487.8 L242.3,487.2 L243.1,486.7 L243.9,486.0 L244.6,485.4 L245.2,484.7 L245.8,484.0 L246.3,483.2 L246.8,482.4 L247.2,481.6 L247.5,480.7 L247.8,479.8 L248.1,478.9 L248.3,478.0 L248.4,477.0 L248.5,476.0 L248.6,475.0 L248.7,474.0 L248.7,472.9 L248.6,471.9 L248.5,470.7 L249.0,469.9 L249.0,469.9 L248.5,470.7 L247.6,471.2 L246.7,471.8 L245.8,472.3 L245.0,472.9 L244.2,473.5 L243.4,474.1 L242.7,474.8 L242.0,475.4 L241.4,476.1 L240.8,476.8 L240.2,477.6 L239.7,478.3 L239.2,479.1 L238.8,479.9 L238.5,480.8 L238.2,481.7 L237.9,482.6 L237.8,483.6 L237.6,484.6 L237.6,485.6 L237.6,486.6 L237.7,487.8 L238.0,489.0ZM238.0,489.0 L239.2,489.2 L240.2,489.2 L241.2,489.2 L242.1,489.1 L242.9,488.9 L243.7,488.6 L244.5,488.4 L245.3,488.0 L246.0,487.6 L246.6,487.2 L247.2,486.7 L247.8,486.2 L248.4,485.6 L248.9,485.0 L249.4,484.3 L249.9,483.6 L250.3,482.9 L250.7,482.1 L251.1,481.3 L251.4,480.5 L251.8,479.6 L252.1,478.7 L252.3,477.8 L253.0,477.3 L253.0,477.3 L252.3,477.8 L251.4,477.9 L250.5,478.0 L249.6,478.1 L248.8,478.3 L247.9,478.5 L247.1,478.8 L246.3,479.0 L245.5,479.3 L244.8,479.7 L244.1,480.0 L243.4,480.4 L242.7,480.9 L242.1,481.4 L241.5,481.9 L240.9,482.5 L240.4,483.1 L239.9,483.8 L239.5,484.5 L239.1,485.2 L238.7,486.1 L238.4,486.9 L238.1,487.9 L238.0,489.0ZM238.0,489.0 L238.9,489.6 L239.7,490.0 L240.5,490.2 L241.3,490.5 L242.1,490.6 L242.9,490.7 L243.6,490.7 L244.3,490.7 L245.0,490.6 L245.7,490.5 L246.4,490.3 L247.1,490.1 L247.7,489.8 L248.4,489.5 L249.0,489.1 L249.6,488.7 L250.3,488.2 L250.9,487.7 L251.5,487.2 L252.0,486.7 L252.6,486.1 L253.2,485.5 L253.7,484.8 L254.4,484.6 L254.4,484.6 L253.7,484.8 L252.9,484.5 L252.1,484.3 L251.4,484.1 L250.6,484.0 L249.8,483.9 L249.1,483.8 L248.3,483.7 L247.6,483.7 L246.8,483.7 L246.1,483.8 L245.4,483.9 L244.7,484.0 L244.0,484.2 L243.4,484.4 L242.7,484.7 L242.1,485.0 L241.4,485.4 L240.8,485.8 L240.2,486.3 L239.6,486.8 L239.0,487.4 L238.5,488.1 L238.0,489.0ZM283.0,491.0 L282.7,490.2 L282.3,489.6 L281.8,489.0 L281.4,488.5 L281.0,488.1 L280.5,487.7 L280.0,487.4 L279.6,487.1 L279.1,486.9 L278.5,486.7 L278.0,486.5 L277.5,486.5 L276.9,486.4 L276.4,486.4 L275.8,486.4 L275.2,486.5 L274.7,486.6 L274.1,486.7 L273.5,486.8 L272.9,487.0 L272.2,487.2 L271.6,487.5 L271.0,487.8 L270.4,487.6 L270.4,487.6 L271.0,487.8 L271.4,488.3 L271.8,488.8 L272.3,489.3 L272.7,489.7 L273.2,490.1 L273.6,490.5 L274.1,490.8 L274.6,491.1 L275.0,491.4 L275.5,491.7 L276.0,491.9 L276.5,492.1 L277.1,492.2 L277.6,492.3 L278.1,492.4 L278.7,492.4 L279.3,492.4 L279.9,492.3 L280.4,492.2 L281.1,492.0 L281.7,491.8 L282.3,491.5 L283.0,491.0ZM283.0,491.0 L283.1,490.0 L283.1,489.1 L283.0,488.4 L282.8,487.6 L282.6,486.9 L282.4,486.3 L282.1,485.7 L281.8,485.1 L281.4,484.6 L281.0,484.1 L280.6,483.7 L280.1,483.3 L279.6,482.9 L279.0,482.6 L278.4,482.3 L277.8,482.0 L277.2,481.8 L276.5,481.6 L275.9,481.4 L275.1,481.2 L274.4,481.0 L273.6,480.9 L272.8,480.8 L272.4,480.4 L272.4,480.4 L272.8,480.8 L272.9,481.6 L273.1,482.3 L273.3,483.0 L273.5,483.7 L273.7,484.4 L273.9,485.0 L274.2,485.6 L274.5,486.2 L274.8,486.8 L275.2,487.3 L275.5,487.9 L275.9,488.3 L276.4,488.8 L276.9,489.2 L277.4,489.6 L277.9,489.9 L278.5,490.2 L279.1,490.4 L279.8,490.7 L280.5,490.9 L281.2,491.0 L282.0,491.1 L283.0,491.0ZM283.0,491.0 L283.5,490.1 L283.9,489.2 L284.1,488.4 L284.3,487.6 L284.4,486.8 L284.4,486.1 L284.4,485.3 L284.4,484.6 L284.3,483.9 L284.1,483.2 L283.9,482.5 L283.6,481.9 L283.3,481.2 L282.9,480.6 L282.5,480.0 L282.1,479.4 L281.6,478.8 L281.1,478.2 L280.5,477.7 L279.9,477.1 L279.3,476.5 L278.7,476.0 L278.0,475.5 L277.7,474.8 L277.7,474.8 L278.0,475.5 L277.7,476.3 L277.6,477.1 L277.4,477.9 L277.3,478.7 L277.3,479.5 L277.2,480.2 L277.2,481.0 L277.2,481.7 L277.3,482.4 L277.3,483.2 L277.5,483.9 L277.6,484.5 L277.9,485.2 L278.1,485.9 L278.4,486.5 L278.8,487.2 L279.2,487.8 L279.7,488.4 L280.2,488.9 L280.8,489.5 L281.4,490.0 L282.1,490.6 L283.0,491.0ZM283.0,491.0 L283.9,490.4 L284.6,489.8 L285.2,489.2 L285.7,488.6 L286.2,488.0 L286.6,487.3 L286.9,486.7 L287.2,486.0 L287.4,485.3 L287.6,484.6 L287.7,483.9 L287.8,483.2 L287.8,482.5 L287.8,481.8 L287.7,481.0 L287.6,480.3 L287.5,479.6 L287.3,478.8 L287.1,478.1 L286.8,477.3 L286.5,476.5 L286.2,475.7 L285.8,475.0 L286.0,474.3 L286.0,474.3 L285.8,475.0 L285.2,475.6 L284.7,476.2 L284.2,476.8 L283.8,477.5 L283.3,478.1 L282.9,478.8 L282.6,479.4 L282.2,480.1 L281.9,480.7 L281.7,481.4 L281.5,482.1 L281.3,482.8 L281.2,483.5 L281.1,484.2 L281.1,484.9 L281.1,485.6 L281.2,486.4 L281.3,487.1 L281.5,487.9 L281.7,488.6 L282.0,489.4 L282.4,490.2 L283.0,491.0ZM283.0,491.0 L284.0,491.0 L284.9,490.9 L285.6,490.7 L286.3,490.4 L287.0,490.1 L287.6,489.8 L288.1,489.5 L288.7,489.1 L289.1,488.7 L289.6,488.2 L289.9,487.7 L290.3,487.2 L290.6,486.6 L290.9,486.0 L291.1,485.4 L291.3,484.8 L291.5,484.1 L291.6,483.4 L291.7,482.7 L291.8,482.0 L291.9,481.3 L291.9,480.5 L291.9,479.7 L292.2,479.2 L292.2,479.2 L291.9,479.7 L291.1,479.9 L290.4,480.1 L289.7,480.4 L289.1,480.7 L288.4,481.0 L287.8,481.3 L287.2,481.6 L286.7,482.0 L286.2,482.4 L285.7,482.8 L285.2,483.2 L284.8,483.7 L284.4,484.2 L284.1,484.7 L283.8,485.2 L283.5,485.8 L283.3,486.4 L283.1,487.1 L282.9,487.8 L282.8,488.5 L282.8,489.3 L282.8,490.1 L283.0,491.0ZM283.0,491.0 L283.8,491.5 L284.5,491.7 L285.1,491.9 L285.7,492.0 L286.4,492.1 L287.0,492.1 L287.5,492.1 L288.1,492.0 L288.6,491.9 L289.2,491.8 L289.7,491.6 L290.1,491.3 L290.6,491.0 L291.1,490.7 L291.5,490.3 L291.9,489.9 L292.3,489.5 L292.7,489.1 L293.1,488.6 L293.5,488.1 L293.9,487.5 L294.2,487.0 L294.6,486.3 L295.1,486.1 L295.1,486.1 L294.6,486.3 L293.9,486.2 L293.3,486.0 L292.6,485.9 L292.0,485.9 L291.4,485.8 L290.8,485.8 L290.2,485.8 L289.7,485.8 L289.1,485.9 L288.6,486.0 L288.0,486.1 L287.5,486.3 L287.0,486.5 L286.5,486.7 L286.0,487.0 L285.6,487.3 L285.2,487.7 L284.7,488.1 L284.3,488.5 L284.0,489.0 L283.6,489.6 L283.3,490.2 L283.0,491.0ZM323.0,495.0 L322.9,494.3 L322.7,493.7 L322.5,493.2 L322.2,492.8 L321.9,492.3 L321.7,492.0 L321.3,491.6 L321.0,491.4 L320.7,491.1 L320.3,490.9 L319.9,490.7 L319.5,490.6 L319.1,490.5 L318.7,490.4 L318.3,490.4 L317.8,490.3 L317.3,490.4 L316.9,490.4 L316.4,490.5 L315.9,490.5 L315.4,490.6 L314.9,490.8 L314.3,490.9 L313.9,490.8 L313.9,490.8 L314.3,490.9 L314.5,491.4 L314.8,491.9 L315.1,492.3 L315.3,492.7 L315.6,493.1 L315.9,493.5 L316.2,493.8 L316.5,494.2 L316.8,494.5 L317.2,494.7 L317.5,495.0 L317.9,495.2 L318.2,495.3 L318.6,495.5 L319.0,495.6 L319.5,495.7 L319.9,495.7 L320.4,495.7 L320.8,495.7 L321.3,495.6 L321.9,495.5 L322.4,495.3 L323.0,495.0ZM323.0,495.0 L323.2,494.3 L323.3,493.6 L323.4,493.0 L323.4,492.4 L323.3,491.8 L323.2,491.3 L323.1,490.8 L323.0,490.3 L322.8,489.8 L322.5,489.4 L322.3,489.0 L322.0,488.6 L321.6,488.2 L321.3,487.8 L320.9,487.5 L320.5,487.1 L320.0,486.8 L319.6,486.5 L319.1,486.2 L318.6,486.0 L318.1,485.7 L317.5,485.5 L316.9,485.2 L316.6,484.8 L316.6,484.8 L316.9,485.2 L316.9,485.9 L316.9,486.4 L316.9,487.0 L317.0,487.6 L317.0,488.1 L317.1,488.7 L317.2,489.2 L317.3,489.7 L317.5,490.2 L317.7,490.7 L317.9,491.1 L318.1,491.6 L318.4,492.0 L318.7,492.4 L319.0,492.8 L319.4,493.1 L319.8,493.5 L320.2,493.8 L320.6,494.1 L321.1,494.4 L321.7,494.6 L322.3,494.9 L323.0,495.0ZM323.0,495.0 L323.6,494.4 L323.9,493.7 L324.2,493.1 L324.5,492.5 L324.7,491.9 L324.9,491.3 L325.0,490.7 L325.0,490.1 L325.1,489.5 L325.1,489.0 L325.0,488.4 L324.9,487.8 L324.8,487.2 L324.6,486.7 L324.4,486.1 L324.2,485.5 L323.9,485.0 L323.7,484.4 L323.4,483.8 L323.0,483.3 L322.7,482.7 L322.3,482.2 L321.8,481.6 L321.8,481.1 L321.8,481.1 L321.8,481.6 L321.5,482.2 L321.3,482.9 L321.0,483.5 L320.8,484.1 L320.7,484.7 L320.5,485.3 L320.4,485.9 L320.3,486.5 L320.2,487.0 L320.1,487.6 L320.1,488.2 L320.1,488.8 L320.2,489.4 L320.3,490.0 L320.4,490.5 L320.5,491.1 L320.8,491.7 L321.0,492.2 L321.3,492.8 L321.6,493.4 L322.0,493.9 L322.4,494.5 L323.0,495.0ZM323.0,495.0 L323.7,494.8 L324.3,494.5 L324.9,494.1 L325.3,493.8 L325.7,493.4 L326.1,493.0 L326.5,492.6 L326.8,492.2 L327.0,491.8 L327.3,491.3 L327.5,490.9 L327.6,490.4 L327.7,489.9 L327.8,489.4 L327.9,488.9 L327.9,488.3 L327.9,487.8 L327.8,487.2 L327.8,486.7 L327.7,486.1 L327.6,485.5 L327.5,484.9 L327.3,484.3 L327.5,483.9 L327.5,483.9 L327.3,484.3 L326.8,484.7 L326.3,485.0 L325.9,485.4 L325.5,485.7 L325.0,486.1 L324.7,486.5 L324.3,486.9 L324.0,487.3 L323.7,487.7 L323.4,488.1 L323.1,488.6 L322.9,489.0 L322.7,489.5 L322.6,490.0 L322.4,490.5 L322.4,491.0 L322.3,491.5 L322.3,492.0 L322.3,492.6 L322.4,493.1 L322.5,493.7 L322.7,494.3 L323.0,495.0ZM323.0,495.0 L323.7,495.2 L324.3,495.3 L324.8,495.3 L325.4,495.3 L325.8,495.3 L326.3,495.2 L326.7,495.0 L327.1,494.9 L327.5,494.7 L327.9,494.5 L328.2,494.2 L328.5,493.9 L328.8,493.6 L329.0,493.3 L329.3,492.9 L329.5,492.5 L329.7,492.1 L329.9,491.6 L330.1,491.2 L330.2,490.7 L330.3,490.2 L330.5,489.7 L330.6,489.1 L330.9,488.8 L330.9,488.8 L330.6,489.1 L330.0,489.1 L329.5,489.1 L329.0,489.1 L328.5,489.2 L328.0,489.3 L327.6,489.3 L327.1,489.5 L326.7,489.6 L326.3,489.7 L325.9,489.9 L325.5,490.1 L325.2,490.3 L324.9,490.6 L324.5,490.9 L324.3,491.2 L324.0,491.5 L323.8,491.9 L323.6,492.3 L323.4,492.8 L323.2,493.2 L323.1,493.8 L323.0,494.3 L323.0,495.0Z" fill="#1b96d6"/><path d="M297,492 C305,489 312,489 318,490 L318,491.5 C310,491 304,491 297,493 Z" fill="#1b96d6"/><path d="M691.2,456.4 L694,493" stroke="#1a9ad6" stroke-width="1.3"/><path d="M692.5,459.5 C703,462 713,474 717.3,491 L723,492.6 C712,491.5 703,491.5 694.5,492 Z" fill="#1a9ad6"/><path d="M689.8,466.6 C688,474 689,485 691.5,492 L680.2,492 C682,481 685,472 689.8,466.6 Z" fill="#1a9ad6"/><path d="M681,493.5 C690,493 700,493 710,493.5 L707,502 L684,502 Z" fill="#1a9ad6"/><path d="M597.5,342.6 C548,351 488,392 476,469 C465,470 455,472 446.4,474.8 C470,469 500,468 531.7,470.3 C550,472 565,475 581.5,479.4 Z" fill="#1572ba"/><path d="M598.4,329.8 L581,484" stroke="#1572ba" stroke-width="2.6"/><path d="M602.7,370.9 C598,410 595,450 584,474.5 C600,473 625,474 643.6,479.4 C640,440 625,395 602.7,370.9 Z" fill="#1572ba"/><path d="M176.60,496.3 A9,9 0 0 0 190.80,496.3 A9,9 0 0 0 205.00,496.3 A9,9 0 0 0 219.20,496.3 A9,9 0 0 0 233.40,496.3 A9,9 0 0 0 247.60,496.3 A9,9 0 0 0 261.80,496.3 A9,9 0 0 0 276.00,496.3 A9,9 0 0 0 290.20,496.3 A9,9 0 0 0 304.40,496.3 A9,9 0 0 0 318.60,496.3 A9,9 0 0 0 332.80,496.3 A9,9 0 0 0 347.00,496.3 A9,9 0 0 0 361.20,496.3 A9,9 0 0 0 375.40,496.3 A9,9 0 0 0 389.60,496.3 A9,9 0 0 0 403.80,496.3 A9,9 0 0 0 418.00,496.3 A9,9 0 0 0 432.20,496.3 A9,9 0 0 0 446.40,496.3 A9,9 0 0 0 460.60,496.3 A9,9 0 0 0 474.80,496.3 A9,9 0 0 0 489.00,496.3 A9,9 0 0 0 503.20,496.3 A9,9 0 0 0 517.40,496.3 A9,9 0 0 0 531.60,496.3 A9,9 0 0 0 545.80,496.3 A9,9 0 0 0 560.00,496.3 A9,9 0 0 0 574.20,496.3 A9,9 0 0 0 588.40,496.3 A9,9 0 0 0 602.60,496.3 A9,9 0 0 0 616.80,496.3 A9,9 0 0 0 631.00,496.3 A9,9 0 0 0 645.20,496.3 A9,9 0 0 0 659.40,496.3 A9,9 0 0 0 673.60,496.3 A9,9 0 0 0 687.80,496.3 A9,9 0 0 0 702.00,496.3 A9,9 0 0 0 716.20,496.3 A9,9 0 0 0 730.40,496.3 A9,9 0 0 0 744.60,496.3 A9,9 0 0 0 758.80,496.3 A9,9 0 0 0 773.00,496.3 A9,9 0 0 0 787.20,496.3 A9,9 0 0 0 801.40,496.3 A9,9 0 0 0 815.60,496.3 A9,9 0 0 0 829.80,496.3 A9,9 0 0 0 844.00,496.3 A9,9 0 0 0 858.20,496.3 A9,9 0 0 0 872.40,496.3 A9,9 0 0 0 886.60,496.3 A9,9 0 0 0 900.80,496.3 A9,9 0 0 0 915.00,496.3 A9,9 0 0 0 929.20,496.3 A9,9 0 0 0 943.40,496.3 A9,9 0 0 0 957.60,496.3 L957.6000000000012,560 L176.60000000000002,560 Z" fill="#1a98d4"/><path d="M516,488.6 C540,485 560,483.5 577.6,483 C600,483 620,483.5 631.6,484 L620.7,510 L526.2,510 Z" fill="#1572ba"/><path d="M181.40,505 A12,12 0 0 0 195.60,505 A12,12 0 0 0 209.80,505 A12,12 0 0 0 224.00,505 A12,12 0 0 0 238.20,505 A12,12 0 0 0 252.40,505 A12,12 0 0 0 266.60,505 A12,12 0 0 0 280.80,505 A12,12 0 0 0 295.00,505 A12,12 0 0 0 309.20,505 A12,12 0 0 0 323.40,505 A12,12 0 0 0 337.60,505 A12,12 0 0 0 351.80,505 A12,12 0 0 0 366.00,505 A12,12 0 0 0 380.20,505 A12,12 0 0 0 394.40,505 A12,12 0 0 0 408.60,505 A12,12 0 0 0 422.80,505 A12,12 0 0 0 437.00,505 A12,12 0 0 0 451.20,505 A12,12 0 0 0 465.40,505 A12,12 0 0 0 479.60,505 A12,12 0 0 0 493.80,505 A12,12 0 0 0 508.00,505 A12,12 0 0 0 522.20,505 A12,12 0 0 0 536.40,505 A12,12 0 0 0 550.60,505 A12,12 0 0 0 564.80,505 A12,12 0 0 0 579.00,505 A12,12 0 0 0 593.20,505 A12,12 0 0 0 607.40,505 A12,12 0 0 0 621.60,505 A12,12 0 0 0 635.80,505 A12,12 0 0 0 650.00,505 A12,12 0 0 0 664.20,505 A12,12 0 0 0 678.40,505 A12,12 0 0 0 692.60,505 A12,12 0 0 0 706.80,505 A12,12 0 0 0 721.00,505 A12,12 0 0 0 735.20,505 A12,12 0 0 0 749.40,505 A12,12 0 0 0 763.60,505 A12,12 0 0 0 777.80,505 A12,12 0 0 0 792.00,505 A12,12 0 0 0 806.20,505 A12,12 0 0 0 820.40,505 A12,12 0 0 0 834.60,505 A12,12 0 0 0 848.80,505 A12,12 0 0 0 863.00,505 A12,12 0 0 0 877.20,505 A12,12 0 0 0 891.40,505 A12,12 0 0 0 905.60,505 A12,12 0 0 0 919.80,505 A12,12 0 0 0 934.00,505 A12,12 0 0 0 948.20,505 A12,12 0 0 0 962.40,505 L962.4000000000012,560 L181.40000000000003,560 Z" fill="#16b3e6"/></g></svg>
<div class="a" style="left:25.5px;top:139.5px;width:134px;height:86px;border:2px solid #b58953;background:#676767"></div>
<svg class="a" style="left:0;top:0" width="1200" height="778" viewBox="0 0 1200 778"><defs><clipPath id="thumbclip"><rect x="29.8" y="143.8" width="124.5" height="67"/></clipPath></defs>
<g clip-path="url(#thumbclip)"><use href="#scene" transform="translate(29.8,143.8) scale(0.1827,0.1755) translate(-205.5,-174)"/></g></svg>
<div class="a" style="left:166px;top:136px;width:791px;height:1px;background:#2e2e2e"></div><div class="a" style="left:166px;top:119px;width:82px;height:17px;background:#3c3c3c"></div><div class="a" style="left:327px;top:139px;width:37px;height:14px;background:#282828"></div><div class="a" style="left:377px;top:139px;width:38px;height:14px;background:#282828"></div><div class="a" style="left:457px;top:136px;width:19px;height:19px;background:#262626"></div><div class="a" style="left:166px;top:156px;width:781px;height:11px;background:#333;border-top:1px solid #262626;border-bottom:1px solid #4a4a4a"></div><div class="a" style="left:165px;top:156px;width:11px;height:418px;background:#333;border-right:1px solid #4a4a4a"></div><div class="a" style="left:947px;top:156px;width:10px;height:418px;background:#2a2a2a"></div><div class="a" style="left:947.5px;top:186px;width:8px;height:340px;background:#5e5e5e"></div><div class="a" style="left:166px;top:574px;width:781px;height:10px;background:#2a2a2a"></div><div class="a" style="left:177px;top:574px;width:409px;height:8.6px;background:#656565"></div><svg class="a" style="left:0;top:0" width="1200" height="778" viewBox="0 0 1200 778"><g transform="translate(168,122)"><path d="M0,0 H5.5 L8,2.5 V10.5 H0 Z" fill="#d2e02c"/><path d="M1.5,5 L2.5,8 L4,6 L5.5,8 L6.5,5" fill="none" stroke="#4a4a10" stroke-width="0.7"/></g><path d="M238.5,125 L242.5,129 M242.5,125 L238.5,129" stroke="#d6d6d6" stroke-width="1.2"/><g transform="translate(171,140)"><rect x="3.5" y="0.5" width="7" height="6" fill="none" stroke="#d6d6d6"/><rect x="0.5" y="4.5" width="4" height="6.5" rx="0.5" fill="#343434" stroke="#d6d6d6"/><path d="M6,9 H8 L9,7.5" fill="none" stroke="#d6d6d6" stroke-width="0.8"/></g><line x1="193.5" y1="138" x2="193.5" y2="154" stroke="#262626"/><line x1="247.5" y1="138" x2="247.5" y2="154" stroke="#262626"/><line x1="450.5" y1="138" x2="450.5" y2="154" stroke="#262626"/><line x1="578.5" y1="138" x2="578.5" y2="154" stroke="#262626"/><path d="M209.5,141 V150 M205,145.5 H214" stroke="#5e5e5e" stroke-width="1.2"/><polyline points="225,144 228,147 231,144" fill="none" stroke="#5e5e5e"/><g transform="translate(428,141)"><rect x="2.5" y="0.5" width="7" height="7" fill="none" stroke="#d6d6d6" stroke-dasharray="1 1"/><rect x="0" y="6" width="4" height="4" fill="#d6d6d6"/><path d="M4,6 L8,2 M6,2 H8 V4" fill="none" stroke="#d6d6d6"/></g><path d="M462.7,141.9 L470.6,146.8 L462.7,151.4 Z" fill="#cfcfcf"/><g transform="translate(482,141)"><path d="M5.5,0 V5 M5.5,5 L1,9.5 M5.5,5 L10,9.5" stroke="#d6d6d6"/><circle cx="5.5" cy="5.5" r="1.5" fill="#343434" stroke="#d6d6d6"/><circle cx="5.5" cy="0.8" r="0.8" fill="#d6d6d6"/><circle cx="1" cy="9.5" r="0.9" fill="#d6d6d6"/><circle cx="10" cy="9.5" r="0.9" fill="#d6d6d6"/></g><g transform="translate(502,141)"><path d="M5,0 V11" stroke="#d6d6d6"/><path d="M3,3.5 C0,4.5 0,7.5 4,8 M7,3 C10,3.5 10.5,6 8,7.5" fill="none" stroke="#d6d6d6"/><path d="M7.5,1.5 L9,3.5 L7,4" fill="none" stroke="#d6d6d6" stroke-width="0.8"/></g><g transform="translate(523,141)"><path d="M0.5,4 V0.5 H4 M6.5,0.5 H10 V4 M10,7 V10.5 H6.5" fill="none" stroke="#d6d6d6"/><rect x="0" y="6" width="4.5" height="4.5" fill="#d6d6d6"/></g><g transform="translate(543,141)"><path d="M2,2.5 H11 L9,9.5 H0 Z" fill="none" stroke="#d6d6d6"/><path d="M1,0 L11,11" stroke="#d6d6d6"/></g><polyline points="564,145 567,148 570,145" fill="none" stroke="#d6d6d6"/><g transform="translate(618,141)"><path d="M0.5,3 V0.5 H3 M7,0.5 H9.5 V3 M9.5,7 V9.5 H7 M3,9.5 H0.5 V7" fill="none" stroke="#d6d6d6"/><rect x="3" y="3" width="4" height="4" fill="none" stroke="#d6d6d6"/></g><defs><clipPath id="rulerclip"><rect x="165" y="156" width="781" height="418"/></clipPath></defs><g clip-path="url(#rulerclip)"><line x1="172.37" y1="158.5" x2="172.37" y2="166.5" stroke="#6a6a6a" stroke-width="0.8"/><text x="173.67" y="164.2" font-size="6.3" fill="#b8b8b8" font-family="Liberation Sans">-50</text><line x1="189.03" y1="163.5" x2="189.03" y2="166.5" stroke="#6a6a6a" stroke-width="0.8"/><line x1="205.70" y1="158.5" x2="205.70" y2="166.5" stroke="#6a6a6a" stroke-width="0.8"/><text x="207.00" y="164.2" font-size="6.3" fill="#b8b8b8" font-family="Liberation Sans">0</text><line x1="222.37" y1="163.5" x2="222.37" y2="166.5" stroke="#6a6a6a" stroke-width="0.8"/><line x1="239.03" y1="158.5" x2="239.03" y2="166.5" stroke="#6a6a6a" stroke-width="0.8"/><text x="240.33" y="164.2" font-size="6.3" fill="#b8b8b8" font-family="Liberation Sans">50</text><line x1="255.70" y1="163.5" x2="255.70" y2="166.5" stroke="#6a6a6a" stroke-width="0.8"/><line x1="272.37" y1="158.5" x2="272.37" y2="166.5" stroke="#6a6a6a" stroke-width="0.8"/><text x="273.67" y="164.2" font-size="6.3" fill="#b8b8b8" font-family="Liberation Sans">100</text><line x1="289.03" y1="163.5" x2="289.03" y2="166.5" stroke="#6a6a6a" stroke-width="0.8"/><line x1="305.70" y1="158.5" x2="305.70" y2="166.5" stroke="#6a6a6a" stroke-width="0.8"/><text x="307.00" y="164.2" font-size="6.3" fill="#b8b8b8" font-family="Liberation Sans">150</text><line x1="322.37" y1="163.5" x2="322.37" y2="166.5" stroke="#6a6a6a" stroke-width="0.8"/><line x1="339.03" y1="158.5" x2="339.03" y2="166.5" stroke="#6a6a6a" stroke-width="0.8"/><text x="340.33" y="164.2" font-size="6.3" fill="#b8b8b8" font-family="Liberation Sans">200</text><line x1="355.70" y1="163.5" x2="355.70" y2="166.5" stroke="#6a6a6a" stroke-width="0.8"/><line x1="372.37" y1="158.5" x2="372.37" y2="166.5" stroke="#6a6a6a" stroke-width="0.8"/><text x="373.67" y="164.2" font-size="6.3" fill="#b8b8b8" font-family="Liberation Sans">250</text><line x1="389.03" y1="163.5" x2="389.03" y2="166.5" stroke="#6a6a6a" stroke-width="0.8"/><line x1="405.70" y1="158.5" x2="405.70" y2="166.5" stroke="#6a6a6a" stroke-width="0.8"/><text x="407.00" y="164.2" font-size="6.3" fill="#b8b8b8" font-family="Liberation Sans">300</text><line x1="422.36" y1="163.5" x2="422.36" y2="166.5" stroke="#6a6a6a" stroke-width="0.8"/><line x1="439.03" y1="158.5" x2="439.03" y2="166.5" stroke="#6a6a6a" stroke-width="0.8"/><text x="440.33" y="164.2" font-size="6.3" fill="#b8b8b8" font-family="Liberation Sans">350</text><line x1="455.70" y1="163.5" x2="455.70" y2="166.5" stroke="#6a6a6a" stroke-width="0.8"/><line x1="472.36" y1="158.5" x2="472.36" y2="166.5" stroke="#6a6a6a" stroke-width="0.8"/><text x="473.66" y="164.2" font-size="6.3" fill="#b8b8b8" font-family="Liberation Sans">400</text><line x1="489.03" y1="163.5" x2="489.03" y2="166.5" stroke="#6a6a6a" stroke-width="0.8"/><line x1="505.70" y1="158.5" x2="505.70" y2="166.5" stroke="#6a6a6a" stroke-width="0.8"/><text x="507.00" y="164.2" font-size="6.3" fill="#b8b8b8" font-family="Liberation Sans">450</text><line x1="522.36" y1="163.5" x2="522.36" y2="166.5" stroke="#6a6a6a" stroke-width="0.8"/><line x1="539.03" y1="158.5" x2="539.03" y2="166.5" stroke="#6a6a6a" stroke-width="0.8"/><text x="540.33" y="164.2" font-size="6.3" fill="#b8b8b8" font-family="Liberation Sans">500</text><line x1="555.70" y1="163.5" x2="555.70" y2="166.5" stroke="#6a6a6a" stroke-width="0.8"/><line x1="572.36" y1="158.5" x2="572.36" y2="166.5" stroke="#6a6a6a" stroke-width="0.8"/><text x="573.66" y="164.2" font-size="6.3" fill="#b8b8b8" font-family="Liberation Sans">550</text><line x1="589.03" y1="163.5" x2="589.03" y2="166.5" stroke="#6a6a6a" stroke-width="0.8"/><line x1="605.70" y1="158.5" x2="605.70" y2="166.5" stroke="#6a6a6a" stroke-width="0.8"/><text x="607.00" y="164.2" font-size="6.3" fill="#b8b8b8" font-family="Liberation Sans">600</text><line x1="622.36" y1="163.5" x2="622.36" y2="166.5" stroke="#6a6a6a" stroke-width="0.8"/><line x1="639.03" y1="158.5" x2="639.03" y2="166.5" stroke="#6a6a6a" stroke-width="0.8"/><text x="640.33" y="164.2" font-size="6.3" fill="#b8b8b8" font-family="Liberation Sans">650</text><line x1="655.70" y1="163.5" x2="655.70" y2="166.5" stroke="#6a6a6a" stroke-width="0.8"/><line x1="672.36" y1="158.5" x2="672.36" y2="166.5" stroke="#6a6a6a" stroke-width="0.8"/><text x="673.66" y="164.2" font-size="6.3" fill="#b8b8b8" font-family="Liberation Sans">700</text><line x1="689.03" y1="163.5" x2="689.03" y2="166.5" stroke="#6a6a6a" stroke-width="0.8"/><line x1="705.69" y1="158.5" x2="705.69" y2="166.5" stroke="#6a6a6a" stroke-width="0.8"/><text x="706.99" y="164.2" font-size="6.3" fill="#b8b8b8" font-family="Liberation Sans">750</text><line x1="722.36" y1="163.5" x2="722.36" y2="166.5" stroke="#6a6a6a" stroke-width="0.8"/><line x1="739.03" y1="158.5" x2="739.03" y2="166.5" stroke="#6a6a6a" stroke-width="0.8"/><text x="740.33" y="164.2" font-size="6.3" fill="#b8b8b8" font-family="Liberation Sans">800</text><line x1="755.69" y1="163.5" x2="755.69" y2="166.5" stroke="#6a6a6a" stroke-width="0.8"/><line x1="772.36" y1="158.5" x2="772.36" y2="166.5" stroke="#6a6a6a" stroke-width="0.8"/><text x="773.66" y="164.2" font-size="6.3" fill="#b8b8b8" font-family="Liberation Sans">850</text><line x1="789.03" y1="163.5" x2="789.03" y2="166.5" stroke="#6a6a6a" stroke-width="0.8"/><line x1="805.69" y1="158.5" x2="805.69" y2="166.5" stroke="#6a6a6a" stroke-width="0.8"/><text x="806.99" y="164.2" font-size="6.3" fill="#b8b8b8" font-family="Liberation Sans">900</text><line x1="822.36" y1="163.5" x2="822.36" y2="166.5" stroke="#6a6a6a" stroke-width="0.8"/><line x1="839.03" y1="158.5" x2="839.03" y2="166.5" stroke="#6a6a6a" stroke-width="0.8"/><text x="840.33" y="164.2" font-size="6.3" fill="#b8b8b8" font-family="Liberation Sans">950</text><line x1="855.69" y1="163.5" x2="855.69" y2="166.5" stroke="#6a6a6a" stroke-width="0.8"/><line x1="872.36" y1="158.5" x2="872.36" y2="166.5" stroke="#6a6a6a" stroke-width="0.8"/><text x="873.66" y="164.2" font-size="6.3" fill="#b8b8b8" font-family="Liberation Sans">1000</text><line x1="889.03" y1="163.5" x2="889.03" y2="166.5" stroke="#6a6a6a" stroke-width="0.8"/><line x1="905.69" y1="158.5" x2="905.69" y2="166.5" stroke="#6a6a6a" stroke-width="0.8"/><text x="906.99" y="164.2" font-size="6.3" fill="#b8b8b8" font-family="Liberation Sans">1050</text><line x1="922.36" y1="163.5" x2="922.36" y2="166.5" stroke="#6a6a6a" stroke-width="0.8"/><line x1="939.03" y1="158.5" x2="939.03" y2="166.5" stroke="#6a6a6a" stroke-width="0.8"/><text x="940.33" y="164.2" font-size="6.3" fill="#b8b8b8" font-family="Liberation Sans">1100</text><line x1="955.69" y1="163.5" x2="955.69" y2="166.5" stroke="#6a6a6a" stroke-width="0.8"/><line x1="168" y1="174.00" x2="176" y2="174.00" stroke="#6a6a6a" stroke-width="0.8"/><text transform="translate(173.2,172.70) rotate(-90)" font-size="6.3" fill="#b8b8b8" font-family="Liberation Sans">0</text><line x1="173" y1="190.67" x2="176" y2="190.67" stroke="#6a6a6a" stroke-width="0.8"/><line x1="168" y1="207.33" x2="176" y2="207.33" stroke="#6a6a6a" stroke-width="0.8"/><text transform="translate(173.2,206.03) rotate(-90)" font-size="6.3" fill="#b8b8b8" font-family="Liberation Sans">50</text><line x1="173" y1="224.00" x2="176" y2="224.00" stroke="#6a6a6a" stroke-width="0.8"/><line x1="168" y1="240.67" x2="176" y2="240.67" stroke="#6a6a6a" stroke-width="0.8"/><text transform="translate(173.2,239.37) rotate(-90)" font-size="6.3" fill="#b8b8b8" font-family="Liberation Sans">100</text><line x1="173" y1="257.33" x2="176" y2="257.33" stroke="#6a6a6a" stroke-width="0.8"/><line x1="168" y1="274.00" x2="176" y2="274.00" stroke="#6a6a6a" stroke-width="0.8"/><text transform="translate(173.2,272.70) rotate(-90)" font-size="6.3" fill="#b8b8b8" font-family="Liberation Sans">150</text><line x1="173" y1="290.67" x2="176" y2="290.67" stroke="#6a6a6a" stroke-width="0.8"/><line x1="168" y1="307.33" x2="176" y2="307.33" stroke="#6a6a6a" stroke-width="0.8"/><text transform="translate(173.2,306.03) rotate(-90)" font-size="6.3" fill="#b8b8b8" font-family="Liberation Sans">200</text><line x1="173" y1="324.00" x2="176" y2="324.00" stroke="#6a6a6a" stroke-width="0.8"/><line x1="168" y1="340.66" x2="176" y2="340.66" stroke="#6a6a6a" stroke-width="0.8"/><text transform="translate(173.2,339.36) rotate(-90)" font-size="6.3" fill="#b8b8b8" font-family="Liberation Sans">250</text><line x1="173" y1="357.33" x2="176" y2="357.33" stroke="#6a6a6a" stroke-width="0.8"/><line x1="168" y1="374.00" x2="176" y2="374.00" stroke="#6a6a6a" stroke-width="0.8"/><text transform="translate(173.2,372.70) rotate(-90)" font-size="6.3" fill="#b8b8b8" font-family="Liberation Sans">300</text><line x1="173" y1="390.66" x2="176" y2="390.66" stroke="#6a6a6a" stroke-width="0.8"/><line x1="168" y1="407.33" x2="176" y2="407.33" stroke="#6a6a6a" stroke-width="0.8"/><text transform="translate(173.2,406.03) rotate(-90)" font-size="6.3" fill="#b8b8b8" font-family="Liberation Sans">350</text><line x1="173" y1="424.00" x2="176" y2="424.00" stroke="#6a6a6a" stroke-width="0.8"/><line x1="168" y1="440.66" x2="176" y2="440.66" stroke="#6a6a6a" stroke-width="0.8"/><text transform="translate(173.2,439.36) rotate(-90)" font-size="6.3" fill="#b8b8b8" font-family="Liberation Sans">400</text><line x1="173" y1="457.33" x2="176" y2="457.33" stroke="#6a6a6a" stroke-width="0.8"/><line x1="168" y1="474.00" x2="176" y2="474.00" stroke="#6a6a6a" stroke-width="0.8"/><text transform="translate(173.2,472.70) rotate(-90)" font-size="6.3" fill="#b8b8b8" font-family="Liberation Sans">450</text><line x1="173" y1="490.66" x2="176" y2="490.66" stroke="#6a6a6a" stroke-width="0.8"/><line x1="168" y1="507.33" x2="176" y2="507.33" stroke="#6a6a6a" stroke-width="0.8"/><text transform="translate(173.2,506.03) rotate(-90)" font-size="6.3" fill="#b8b8b8" font-family="Liberation Sans">500</text><line x1="173" y1="524.00" x2="176" y2="524.00" stroke="#6a6a6a" stroke-width="0.8"/><line x1="168" y1="540.66" x2="176" y2="540.66" stroke="#6a6a6a" stroke-width="0.8"/><text transform="translate(173.2,539.36) rotate(-90)" font-size="6.3" fill="#b8b8b8" font-family="Liberation Sans">550</text><line x1="173" y1="557.33" x2="176" y2="557.33" stroke="#6a6a6a" stroke-width="0.8"/><line x1="168" y1="574.00" x2="176" y2="574.00" stroke="#6a6a6a" stroke-width="0.8"/><text transform="translate(173.2,572.70) rotate(-90)" font-size="6.3" fill="#b8b8b8" font-family="Liberation Sans">600</text></g><rect x="165" y="156" width="11" height="11" fill="#333"/><path d="M166,157 L176,167" stroke="#777" stroke-width="0.7"/><polyline points="949,164 951.5,161.5 954,164" fill="none" stroke="#bbb" stroke-width="0.9"/><polyline points="949,565 951.5,567.5 954,565" fill="none" stroke="#bbb" stroke-width="0.9"/><polyline points="173,576.5 170.5,579 173,581.5" fill="none" stroke="#bbb" stroke-width="0.9"/><polyline points="942,576.5 944.5,579 942,581.5" fill="none" stroke="#bbb" stroke-width="0.9"/></svg>
<div class="a" style="left:0;top:0;width:1200px;height:755px;overflow:hidden"><div class="a" style="left:22px;top:605px;width:203px;height:32px;background:#2e2e2e"></div><div class="a" style="left:22px;top:637px;width:203px;height:15px;background:#262626"></div><div class="a" style="left:22px;top:652px;width:8px;height:15px;background:#2a2a2a"></div><div class="a" style="left:30px;top:652px;width:195px;height:15px;background:#676767;border-bottom:1px solid #2f2f2f"></div><div class="a" style="left:26px;top:652px;width:4px;height:15px;background:#d8c63c"></div><div class="a" style="left:225px;top:652px;width:724px;height:15px;background:#676767;border-bottom:1px solid #2f2f2f"></div><div class="a" style="left:22px;top:667px;width:8px;height:16px;background:#2a2a2a"></div><div class="a" style="left:30px;top:667px;width:195px;height:16px;background:#3e3e3e;border-bottom:1px solid #2f2f2f"></div><div class="a" style="left:26px;top:667px;width:4px;height:16px;background:#d8c63c"></div><div class="a" style="left:225px;top:667px;width:724px;height:16px;background:#3e3e3e;border-bottom:1px solid #2f2f2f"></div><div class="a" style="left:22px;top:683px;width:8px;height:16px;background:#2a2a2a"></div><div class="a" style="left:30px;top:683px;width:195px;height:16px;background:#3e3e3e;border-bottom:1px solid #2f2f2f"></div><div class="a" style="left:26px;top:683px;width:4px;height:16px;background:#6a3db0"></div><div class="a" style="left:225px;top:683px;width:724px;height:16px;background:#3e3e3e;border-bottom:1px solid #2f2f2f"></div><div class="a" style="left:22px;top:699px;width:8px;height:16px;background:#2a2a2a"></div><div class="a" style="left:30px;top:699px;width:195px;height:16px;background:#3e3e3e;border-bottom:1px solid #2f2f2f"></div><div class="a" style="left:26px;top:699px;width:4px;height:16px;background:#3f55bd"></div><div class="a" style="left:225px;top:699px;width:724px;height:16px;background:#3e3e3e;border-bottom:1px solid #2f2f2f"></div><div class="a" style="left:22px;top:715px;width:8px;height:16px;background:#2a2a2a"></div><div class="a" style="left:30px;top:715px;width:195px;height:16px;background:#3e3e3e;border-bottom:1px solid #2f2f2f"></div><div class="a" style="left:26px;top:715px;width:4px;height:16px;background:#1a9ed8"></div><div class="a" style="left:225px;top:715px;width:724px;height:16px;background:#3e3e3e;border-bottom:1px solid #2f2f2f"></div><div class="a" style="left:22px;top:731px;width:8px;height:16px;background:#2a2a2a"></div><div class="a" style="left:30px;top:731px;width:195px;height:16px;background:#3e3e3e;border-bottom:1px solid #2f2f2f"></div><div class="a" style="left:26px;top:731px;width:4px;height:16px;background:#1aa6b4"></div><div class="a" style="left:225px;top:731px;width:724px;height:16px;background:#3e3e3e;border-bottom:1px solid #2f2f2f"></div><div class="a" style="left:22px;top:747px;width:8px;height:16px;background:#2a2a2a"></div><div class="a" style="left:30px;top:747px;width:195px;height:16px;background:#3e3e3e;border-bottom:1px solid #2f2f2f"></div><div class="a" style="left:26px;top:747px;width:4px;height:16px;background:#20a890"></div><div class="a" style="left:225px;top:747px;width:724px;height:16px;background:#3e3e3e;border-bottom:1px solid #2f2f2f"></div><div class="a" style="left:22px;top:605px;width:2px;height:150px;background:#2a2a2a"></div><div class="a" style="left:225px;top:606px;width:732px;height:17px;background:#333"></div><div class="a" style="left:225px;top:623px;width:724px;height:14px;background:#333"></div><div class="a" style="left:225px;top:637px;width:724px;height:15px;background:#262626"></div><div class="a" style="left:225px;top:637px;width:5px;height:110px;background:#2c2c2c"></div><div class="a" style="left:224px;top:605px;width:1px;height:150px;background:#505050"></div><div class="a" style="left:949px;top:623px;width:9px;height:124px;background:#2a2a2a"></div><div class="a" style="left:949px;top:632px;width:8px;height:40px;background:#5e5e5e"></div><div class="a" style="left:225px;top:747px;width:724px;height:8px;background:#2a2a2a"></div><div class="a" style="left:236px;top:747px;width:476px;height:8px;background:#6a6a6a"></div><svg class="a" style="left:0;top:0" width="1200" height="778" viewBox="0 0 1200 778"><polyline points="133.5,594.5 136.3,597.3 139.1,594.5" fill="none" stroke="#d6d6d6" stroke-width="1"/><polyline points="166.5,594.5 169.3,597.3 172.1,594.5" fill="none" stroke="#d6d6d6" stroke-width="1"/><path d="M151.4,591.8 V600.2 M147,596 H155.8" stroke="#e8e8e8" stroke-width="1.6"/><line x1="181.5" y1="589" x2="181.5" y2="603" stroke="#262626"/><line x1="277.5" y1="589" x2="277.5" y2="603" stroke="#262626"/><path d="M194.5,592.3 V599 M202,592.3 L196.5,595.7 L202,599 Z" fill="none" stroke="#d6d6d6"/><path d="M213.8,590.6 L224.2,595.8 L213.8,601 Z" fill="#dcdcdc"/><path d="M243,592.3 V599 M235.6,592.3 L241,595.7 L235.6,599 Z" fill="none" stroke="#d6d6d6"/><rect x="254.5" y="592.5" width="11" height="6.5" rx="3.2" fill="none" stroke="#d6d6d6"/><path d="M258.5,598 L260,600.5" stroke="#d6d6d6"/><path d="M289,590 V601.5 H299 M290,600.5 L298.5,591" fill="none" stroke="#d6d6d6" stroke-width="1.1"/><circle cx="314.8" cy="596" r="4.8" fill="none" stroke="#d6d6d6"/><circle cx="314.8" cy="596" r="3" fill="#d6d6d6"/><rect x="330.5" y="591.5" width="9" height="9" fill="none" stroke="#d6d6d6"/><path d="M333.5,591.5 V600.5 M336.5,591.5 V600.5" stroke="#d6d6d6" stroke-width="1.5"/><path d="M356,590 L357,593 L360,594 L357,595 L356,598 L355,595 L352,594 L355,593 Z M352,598 l0.6,1.5 1.5,0.6 -1.5,0.6 -0.6,1.5 -0.6,-1.5 -1.5,-0.6 1.5,-0.6Z M360.5,590.5 v3 M359,592 h3" fill="#d6d6d6" stroke="#d6d6d6" stroke-width="0.5"/><ellipse cx="721.5" cy="595.5" rx="4.5" ry="4" fill="#e0e0e0"/><path d="M718,598 L716.5,601 L720,599" fill="#e0e0e0"/><rect x="732.5" y="587" width="31.5" height="17.5" fill="#262626"/><path d="M738,591 H743 C746,591 746,596 743,596 H738 M743,596 L746,600 M738,588.5 V601.5 M736.5,600 H740" fill="none" stroke="#cfcfcf" stroke-width="1.1"/><path d="M737.5,589 V601" stroke="#c9a840" stroke-dasharray="1 1"/><polyline points="756,594.5 758.8,597.3 761.6,594.5" fill="none" stroke="#d6d6d6" stroke-width="1"/><rect x="769.8" y="590.5" width="2.8" height="2.8" fill="#e0e0e0"/><rect x="769.8" y="594.0" width="2.8" height="2.8" fill="#e0e0e0"/><rect x="769.8" y="597.5" width="2.8" height="2.8" fill="#e0e0e0"/><rect x="773.3" y="590.5" width="2.8" height="2.8" fill="#e0e0e0"/><rect x="773.3" y="594.0" width="2.8" height="2.8" fill="#e0e0e0"/><rect x="773.3" y="597.5" width="2.8" height="2.8" fill="#e0e0e0"/><rect x="776.8" y="590.5" width="2.8" height="2.8" fill="#e0e0e0"/><rect x="776.8" y="594.0" width="2.8" height="2.8" fill="#e0e0e0"/><rect x="776.8" y="597.5" width="2.8" height="2.8" fill="#e0e0e0"/><polyline points="790.5,594.5 793.3,597.3 796.1,594.5" fill="none" stroke="#d6d6d6" stroke-width="1"/><path d="M805.7,596 H811" stroke="#d6d6d6" stroke-width="1.4"/><line x1="819" y1="596" x2="875" y2="596" stroke="#9a9a9a" stroke-width="1.5"/><circle cx="824.6" cy="596" r="4" fill="#a8a8a8"/><path d="M884.7,592.5 V599.5 M881.2,596 H888.2" stroke="#d6d6d6" stroke-width="1.3"/><path d="M902,600 L905,597 M906.5,595.5 L909.5,592.5 M902,597.5 V600 H904.5 M907,592.5 H909.5 V595" fill="none" stroke="#d6d6d6"/><rect x="922.5" y="593.5" width="5.5" height="5.5" fill="none" stroke="#d6d6d6"/><path d="M924.5,593.5 V591.5 H930 V597 H928" fill="none" stroke="#d6d6d6"/><path d="M943,592.5 L950.5,600 M950.5,592.5 L943,600" stroke="#d6d6d6" stroke-width="1.1"/><circle cx="210.5" cy="612.5" r="3.3" fill="none" stroke="#d6d6d6" stroke-width="1.1"/><path d="M213,615 L217.3,618.8" stroke="#d6d6d6" stroke-width="1.3"/><path d="M220.6,626.7 L215,629.6 L220.6,632.6 Z" fill="#e0e0e0"/><path d="M35,641.5 H41.7 M35,648 H41.7 M38.4,641.5 V648 M36.5,643.5 L38.4,645 L40.3,643.5 M36.5,646 L38.4,644.5 L40.3,646" fill="none" stroke="#d6d6d6" stroke-width="0.9"/><path d="M175.8,644 C177.8,640.8 181.7,640.8 183.7,644 C181.7,647.2 177.8,647.2 175.8,644 Z" fill="none" stroke="#d6d6d6" stroke-width="1.4"/><circle cx="179.75" cy="644" r="1.3" fill="#d6d6d6"/><rect x="189" y="644.2" width="6" height="4.6" fill="#d6d6d6"/><path d="M190.2,644.2 V642.8 C190.2,640.4 193.8,640.4 193.8,642.8 V644.2" fill="none" stroke="#d6d6d6" stroke-width="1.1"/><rect x="195.3" y="642.5" width="2" height="6.3" fill="#d6d6d6" fill-opacity="0.5"/><path d="M208.3,639.7 L203.20000000000002,645.2 L205.4,645.2 L203.70000000000002,648.4 L208.3,643.1 L206.20000000000002,643.1 Z" fill="#d6d6d6" stroke="#d6d6d6" stroke-width="0.4" stroke-linejoin="round"/><path d="M218.5,640.2 L222.2,643.9 L218.5,647.6 L214.8,643.9 Z" fill="none" stroke="#d6d6d6" stroke-width="1.2"/><circle cx="218.5" cy="643.9" r="1.3" fill="#d6d6d6"/><path d="M35.8,658 L39.6,658 L37.7,660.5 Z" fill="#e8e8e8"/><path d="M208.3,655.2 L203.20000000000002,660.7 L205.4,660.7 L203.70000000000002,663.9 L208.3,658.6 L206.20000000000002,658.6 Z" fill="#d0d0d0" stroke="#d0d0d0" stroke-width="0.4" stroke-linejoin="round"/><path d="M176.3,675 C178.3,671.8 182.2,671.8 184.2,675 C182.2,678.2 178.3,678.2 176.3,675 Z" fill="none" stroke="#d6d6d6" stroke-width="1.4"/><circle cx="180.25" cy="675" r="1.3" fill="#d6d6d6"/><rect x="189.8" y="675.1" width="5.8" height="4.3" fill="#d6d6d6"/><path d="M194.10000000000002,675.1 V673.6 C194.10000000000002,671.3000000000001 197.60000000000002,671.3000000000001 197.60000000000002,673.6" fill="none" stroke="#d6d6d6" stroke-width="1.1"/><path d="M208.3,670.7 L203.20000000000002,676.2 L205.4,676.2 L203.70000000000002,679.4 L208.3,674.1 L206.20000000000002,674.1 Z" fill="#d6d6d6" stroke="#d6d6d6" stroke-width="0.4" stroke-linejoin="round"/><path d="M176.3,691 C178.3,687.8 182.2,687.8 184.2,691 C182.2,694.2 178.3,694.2 176.3,691 Z" fill="none" stroke="#d6d6d6" stroke-width="1.4"/><circle cx="180.25" cy="691" r="1.3" fill="#d6d6d6"/><rect x="189.8" y="691.1" width="5.8" height="4.3" fill="#d6d6d6"/><path d="M194.10000000000002,691.1 V689.6 C194.10000000000002,687.3000000000001 197.60000000000002,687.3000000000001 197.60000000000002,689.6" fill="none" stroke="#d6d6d6" stroke-width="1.1"/><path d="M208.3,686.7 L203.20000000000002,692.2 L205.4,692.2 L203.70000000000002,695.4 L208.3,690.1 L206.20000000000002,690.1 Z" fill="#d6d6d6" stroke="#d6d6d6" stroke-width="0.4" stroke-linejoin="round"/><path d="M176.3,707 C178.3,703.8 182.2,703.8 184.2,707 C182.2,710.2 178.3,710.2 176.3,707 Z" fill="none" stroke="#d6d6d6" stroke-width="1.4"/><circle cx="180.25" cy="707" r="1.3" fill="#d6d6d6"/><rect x="189.8" y="707.1" width="5.8" height="4.3" fill="#d6d6d6"/><path d="M194.10000000000002,707.1 V705.6 C194.10000000000002,703.3000000000001 197.60000000000002,703.3000000000001 197.60000000000002,705.6" fill="none" stroke="#d6d6d6" stroke-width="1.1"/><path d="M208.3,702.7 L203.20000000000002,708.2 L205.4,708.2 L203.70000000000002,711.4 L208.3,706.1 L206.20000000000002,706.1 Z" fill="#d6d6d6" stroke="#d6d6d6" stroke-width="0.4" stroke-linejoin="round"/><path d="M176.3,723 C178.3,719.8 182.2,719.8 184.2,723 C182.2,726.2 178.3,726.2 176.3,723 Z" fill="none" stroke="#d6d6d6" stroke-width="1.4"/><circle cx="180.25" cy="723" r="1.3" fill="#d6d6d6"/><rect x="189.8" y="723.1" width="5.8" height="4.3" fill="#d6d6d6"/><path d="M194.10000000000002,723.1 V721.6 C194.10000000000002,719.3000000000001 197.60000000000002,719.3000000000001 197.60000000000002,721.6" fill="none" stroke="#d6d6d6" stroke-width="1.1"/><path d="M208.3,718.7 L203.20000000000002,724.2 L205.4,724.2 L203.70000000000002,727.4 L208.3,722.1 L206.20000000000002,722.1 Z" fill="#d6d6d6" stroke="#d6d6d6" stroke-width="0.4" stroke-linejoin="round"/><path d="M176.3,739 C178.3,735.8 182.2,735.8 184.2,739 C182.2,742.2 178.3,742.2 176.3,739 Z" fill="none" stroke="#d6d6d6" stroke-width="1.4"/><circle cx="180.25" cy="739" r="1.3" fill="#d6d6d6"/><rect x="189.8" y="739.1" width="5.8" height="4.3" fill="#d6d6d6"/><path d="M194.10000000000002,739.1 V737.6 C194.10000000000002,735.3000000000001 197.60000000000002,735.3000000000001 197.60000000000002,737.6" fill="none" stroke="#d6d6d6" stroke-width="1.1"/><path d="M208.3,734.7 L203.20000000000002,740.2 L205.4,740.2 L203.70000000000002,743.4 L208.3,738.1 L206.20000000000002,738.1 Z" fill="#d6d6d6" stroke="#d6d6d6" stroke-width="0.4" stroke-linejoin="round"/><path d="M176.3,755 C178.3,751.8 182.2,751.8 184.2,755 C182.2,758.2 178.3,758.2 176.3,755 Z" fill="none" stroke="#d6d6d6" stroke-width="1.4"/><circle cx="180.25" cy="755" r="1.3" fill="#d6d6d6"/><rect x="189.8" y="755.1" width="5.8" height="4.3" fill="#d6d6d6"/><path d="M194.10000000000002,755.1 V753.6 C194.10000000000002,751.3000000000001 197.60000000000002,751.3000000000001 197.60000000000002,753.6" fill="none" stroke="#d6d6d6" stroke-width="1.1"/><path d="M208.3,750.7 L203.20000000000002,756.2 L205.4,756.2 L203.70000000000002,759.4 L208.3,754.1 L206.20000000000002,754.1 Z" fill="#d6d6d6" stroke="#d6d6d6" stroke-width="0.4" stroke-linejoin="round"/><path d="M216,677 L218.5,674.5 L221,677 M216,674.5 L218.5,672 L221,674.5" fill="none" stroke="#d6d6d6" stroke-width="0.9"/><path d="M229.8,671.8 L233,675 L229.8,678.2 L226.6,675 Z" fill="#e8e8e8"/><line x1="230.00" y1="614.5" x2="230.00" y2="622" stroke="#8a8a8a" stroke-width="0.8"/><text x="230.00" y="613.2" font-size="6.2" fill="#bdbdbd" text-anchor="middle" font-family="Liberation Sans">00:00</text><line x1="233.33" y1="619.5" x2="233.33" y2="622" stroke="#6a6a6a" stroke-width="0.8"/><line x1="236.66" y1="619.5" x2="236.66" y2="622" stroke="#6a6a6a" stroke-width="0.8"/><line x1="239.99" y1="619.5" x2="239.99" y2="622" stroke="#6a6a6a" stroke-width="0.8"/><line x1="243.32" y1="619.5" x2="243.32" y2="622" stroke="#6a6a6a" stroke-width="0.8"/><line x1="246.65" y1="617.5" x2="246.65" y2="622" stroke="#7a7a7a" stroke-width="0.8"/><line x1="249.98" y1="619.5" x2="249.98" y2="622" stroke="#6a6a6a" stroke-width="0.8"/><line x1="253.31" y1="619.5" x2="253.31" y2="622" stroke="#6a6a6a" stroke-width="0.8"/><line x1="256.64" y1="619.5" x2="256.64" y2="622" stroke="#6a6a6a" stroke-width="0.8"/><line x1="259.97" y1="619.5" x2="259.97" y2="622" stroke="#6a6a6a" stroke-width="0.8"/><line x1="263.30" y1="614.5" x2="263.30" y2="622" stroke="#8a8a8a" stroke-width="0.8"/><text x="263.30" y="613.2" font-size="6.2" fill="#bdbdbd" text-anchor="middle" font-family="Liberation Sans">00:01</text><line x1="266.63" y1="619.5" x2="266.63" y2="622" stroke="#6a6a6a" stroke-width="0.8"/><line x1="269.96" y1="619.5" x2="269.96" y2="622" stroke="#6a6a6a" stroke-width="0.8"/><line x1="273.29" y1="619.5" x2="273.29" y2="622" stroke="#6a6a6a" stroke-width="0.8"/><line x1="276.62" y1="619.5" x2="276.62" y2="622" stroke="#6a6a6a" stroke-width="0.8"/><line x1="279.95" y1="617.5" x2="279.95" y2="622" stroke="#7a7a7a" stroke-width="0.8"/><line x1="283.28" y1="619.5" x2="283.28" y2="622" stroke="#6a6a6a" stroke-width="0.8"/><line x1="286.61" y1="619.5" x2="286.61" y2="622" stroke="#6a6a6a" stroke-width="0.8"/><line x1="289.94" y1="619.5" x2="289.94" y2="622" stroke="#6a6a6a" stroke-width="0.8"/><line x1="293.27" y1="619.5" x2="293.27" y2="622" stroke="#6a6a6a" stroke-width="0.8"/><line x1="296.60" y1="614.5" x2="296.60" y2="622" stroke="#8a8a8a" stroke-width="0.8"/><text x="296.60" y="613.2" font-size="6.2" fill="#bdbdbd" text-anchor="middle" font-family="Liberation Sans">00:02</text><line x1="299.93" y1="619.5" x2="299.93" y2="622" stroke="#6a6a6a" stroke-width="0.8"/><line x1="303.26" y1="619.5" x2="303.26" y2="622" stroke="#6a6a6a" stroke-width="0.8"/><line x1="306.59" y1="619.5" x2="306.59" y2="622" stroke="#6a6a6a" stroke-width="0.8"/><line x1="309.92" y1="619.5" x2="309.92" y2="622" stroke="#6a6a6a" stroke-width="0.8"/><line x1="313.25" y1="617.5" x2="313.25" y2="622" stroke="#7a7a7a" stroke-width="0.8"/><line x1="316.58" y1="619.5" x2="316.58" y2="622" stroke="#6a6a6a" stroke-width="0.8"/><line x1="319.91" y1="619.5" x2="319.91" y2="622" stroke="#6a6a6a" stroke-width="0.8"/><line x1="323.24" y1="619.5" x2="323.24" y2="622" stroke="#6a6a6a" stroke-width="0.8"/><line x1="326.57" y1="619.5" x2="326.57" y2="622" stroke="#6a6a6a" stroke-width="0.8"/><line x1="329.90" y1="614.5" x2="329.90" y2="622" stroke="#8a8a8a" stroke-width="0.8"/><text x="329.90" y="613.2" font-size="6.2" fill="#bdbdbd" text-anchor="middle" font-family="Liberation Sans">00:03</text><line x1="333.23" y1="619.5" x2="333.23" y2="622" stroke="#6a6a6a" stroke-width="0.8"/><line x1="336.56" y1="619.5" x2="336.56" y2="622" stroke="#6a6a6a" stroke-width="0.8"/><line x1="339.89" y1="619.5" x2="339.89" y2="622" stroke="#6a6a6a" stroke-width="0.8"/><line x1="343.22" y1="619.5" x2="343.22" y2="622" stroke="#6a6a6a" stroke-width="0.8"/><line x1="346.55" y1="617.5" x2="346.55" y2="622" stroke="#7a7a7a" stroke-width="0.8"/><line x1="349.88" y1="619.5" x2="349.88" y2="622" stroke="#6a6a6a" stroke-width="0.8"/><line x1="353.21" y1="619.5" x2="353.21" y2="622" stroke="#6a6a6a" stroke-width="0.8"/><line x1="356.54" y1="619.5" x2="356.54" y2="622" stroke="#6a6a6a" stroke-width="0.8"/><line x1="359.87" y1="619.5" x2="359.87" y2="622" stroke="#6a6a6a" stroke-width="0.8"/><line x1="363.20" y1="614.5" x2="363.20" y2="622" stroke="#8a8a8a" stroke-width="0.8"/><text x="363.20" y="613.2" font-size="6.2" fill="#bdbdbd" text-anchor="middle" font-family="Liberation Sans">00:04</text><line x1="366.53" y1="619.5" x2="366.53" y2="622" stroke="#6a6a6a" stroke-width="0.8"/><line x1="369.86" y1="619.5" x2="369.86" y2="622" stroke="#6a6a6a" stroke-width="0.8"/><line x1="373.19" y1="619.5" x2="373.19" y2="622" stroke="#6a6a6a" stroke-width="0.8"/><line x1="376.52" y1="619.5" x2="376.52" y2="622" stroke="#6a6a6a" stroke-width="0.8"/><line x1="379.85" y1="617.5" x2="379.85" y2="622" stroke="#7a7a7a" stroke-width="0.8"/><line x1="383.18" y1="619.5" x2="383.18" y2="622" stroke="#6a6a6a" stroke-width="0.8"/><line x1="386.51" y1="619.5" x2="386.51" y2="622" stroke="#6a6a6a" stroke-width="0.8"/><line x1="389.84" y1="619.5" x2="389.84" y2="622" stroke="#6a6a6a" stroke-width="0.8"/><line x1="393.17" y1="619.5" x2="393.17" y2="622" stroke="#6a6a6a" stroke-width="0.8"/><line x1="396.50" y1="614.5" x2="396.50" y2="622" stroke="#8a8a8a" stroke-width="0.8"/><text x="396.50" y="613.2" font-size="6.2" fill="#bdbdbd" text-anchor="middle" font-family="Liberation Sans">00:05</text><line x1="399.83" y1="619.5" x2="399.83" y2="622" stroke="#6a6a6a" stroke-width="0.8"/><line x1="403.16" y1="619.5" x2="403.16" y2="622" stroke="#6a6a6a" stroke-width="0.8"/><line x1="406.49" y1="619.5" x2="406.49" y2="622" stroke="#6a6a6a" stroke-width="0.8"/><line x1="409.82" y1="619.5" x2="409.82" y2="622" stroke="#6a6a6a" stroke-width="0.8"/><line x1="413.15" y1="617.5" x2="413.15" y2="622" stroke="#7a7a7a" stroke-width="0.8"/><line x1="416.48" y1="619.5" x2="416.48" y2="622" stroke="#6a6a6a" stroke-width="0.8"/><line x1="419.81" y1="619.5" x2="419.81" y2="622" stroke="#6a6a6a" stroke-width="0.8"/><line x1="423.14" y1="619.5" x2="423.14" y2="622" stroke="#6a6a6a" stroke-width="0.8"/><line x1="426.47" y1="619.5" x2="426.47" y2="622" stroke="#6a6a6a" stroke-width="0.8"/><line x1="429.80" y1="614.5" x2="429.80" y2="622" stroke="#8a8a8a" stroke-width="0.8"/><text x="429.80" y="613.2" font-size="6.2" fill="#bdbdbd" text-anchor="middle" font-family="Liberation Sans">00:06</text><line x1="433.13" y1="619.5" x2="433.13" y2="622" stroke="#6a6a6a" stroke-width="0.8"/><line x1="436.46" y1="619.5" x2="436.46" y2="622" stroke="#6a6a6a" stroke-width="0.8"/><line x1="439.79" y1="619.5" x2="439.79" y2="622" stroke="#6a6a6a" stroke-width="0.8"/><line x1="443.12" y1="619.5" x2="443.12" y2="622" stroke="#6a6a6a" stroke-width="0.8"/><line x1="446.45" y1="617.5" x2="446.45" y2="622" stroke="#7a7a7a" stroke-width="0.8"/><line x1="449.78" y1="619.5" x2="449.78" y2="622" stroke="#6a6a6a" stroke-width="0.8"/><line x1="453.11" y1="619.5" x2="453.11" y2="622" stroke="#6a6a6a" stroke-width="0.8"/><line x1="456.44" y1="619.5" x2="456.44" y2="622" stroke="#6a6a6a" stroke-width="0.8"/><line x1="459.77" y1="619.5" x2="459.77" y2="622" stroke="#6a6a6a" stroke-width="0.8"/><line x1="463.10" y1="614.5" x2="463.10" y2="622" stroke="#8a8a8a" stroke-width="0.8"/><text x="463.10" y="613.2" font-size="6.2" fill="#bdbdbd" text-anchor="middle" font-family="Liberation Sans">00:07</text><line x1="466.43" y1="619.5" x2="466.43" y2="622" stroke="#6a6a6a" stroke-width="0.8"/><line x1="469.76" y1="619.5" x2="469.76" y2="622" stroke="#6a6a6a" stroke-width="0.8"/><line x1="473.09" y1="619.5" x2="473.09" y2="622" stroke="#6a6a6a" stroke-width="0.8"/><line x1="476.42" y1="619.5" x2="476.42" y2="622" stroke="#6a6a6a" stroke-width="0.8"/><line x1="479.75" y1="617.5" x2="479.75" y2="622" stroke="#7a7a7a" stroke-width="0.8"/><line x1="483.08" y1="619.5" x2="483.08" y2="622" stroke="#6a6a6a" stroke-width="0.8"/><line x1="486.41" y1="619.5" x2="486.41" y2="622" stroke="#6a6a6a" stroke-width="0.8"/><line x1="489.74" y1="619.5" x2="489.74" y2="622" stroke="#6a6a6a" stroke-width="0.8"/><line x1="493.07" y1="619.5" x2="493.07" y2="622" stroke="#6a6a6a" stroke-width="0.8"/><line x1="496.40" y1="614.5" x2="496.40" y2="622" stroke="#8a8a8a" stroke-width="0.8"/><text x="496.40" y="613.2" font-size="6.2" fill="#bdbdbd" text-anchor="middle" font-family="Liberation Sans">00:08</text><line x1="499.73" y1="619.5" x2="499.73" y2="622" stroke="#6a6a6a" stroke-width="0.8"/><line x1="503.06" y1="619.5" x2="503.06" y2="622" stroke="#6a6a6a" stroke-width="0.8"/><line x1="506.39" y1="619.5" x2="506.39" y2="622" stroke="#6a6a6a" stroke-width="0.8"/><line x1="509.72" y1="619.5" x2="509.72" y2="622" stroke="#6a6a6a" stroke-width="0.8"/><line x1="513.05" y1="617.5" x2="513.05" y2="622" stroke="#7a7a7a" stroke-width="0.8"/><line x1="516.38" y1="619.5" x2="516.38" y2="622" stroke="#6a6a6a" stroke-width="0.8"/><line x1="519.71" y1="619.5" x2="519.71" y2="622" stroke="#6a6a6a" stroke-width="0.8"/><line x1="523.04" y1="619.5" x2="523.04" y2="622" stroke="#6a6a6a" stroke-width="0.8"/><line x1="526.37" y1="619.5" x2="526.37" y2="622" stroke="#6a6a6a" stroke-width="0.8"/><line x1="529.70" y1="614.5" x2="529.70" y2="622" stroke="#8a8a8a" stroke-width="0.8"/><text x="529.70" y="613.2" font-size="6.2" fill="#bdbdbd" text-anchor="middle" font-family="Liberation Sans">00:09</text><line x1="533.03" y1="619.5" x2="533.03" y2="622" stroke="#6a6a6a" stroke-width="0.8"/><line x1="536.36" y1="619.5" x2="536.36" y2="622" stroke="#6a6a6a" stroke-width="0.8"/><line x1="539.69" y1="619.5" x2="539.69" y2="622" stroke="#6a6a6a" stroke-width="0.8"/><line x1="543.02" y1="619.5" x2="543.02" y2="622" stroke="#6a6a6a" stroke-width="0.8"/><line x1="546.35" y1="617.5" x2="546.35" y2="622" stroke="#7a7a7a" stroke-width="0.8"/><line x1="549.68" y1="619.5" x2="549.68" y2="622" stroke="#6a6a6a" stroke-width="0.8"/><line x1="553.01" y1="619.5" x2="553.01" y2="622" stroke="#6a6a6a" stroke-width="0.8"/><line x1="556.34" y1="619.5" x2="556.34" y2="622" stroke="#6a6a6a" stroke-width="0.8"/><line x1="559.67" y1="619.5" x2="559.67" y2="622" stroke="#6a6a6a" stroke-width="0.8"/><line x1="563.00" y1="614.5" x2="563.00" y2="622" stroke="#8a8a8a" stroke-width="0.8"/><text x="563.00" y="613.2" font-size="6.2" fill="#bdbdbd" text-anchor="middle" font-family="Liberation Sans">00:10</text><line x1="566.33" y1="619.5" x2="566.33" y2="622" stroke="#6a6a6a" stroke-width="0.8"/><line x1="569.66" y1="619.5" x2="569.66" y2="622" stroke="#6a6a6a" stroke-width="0.8"/><line x1="572.99" y1="619.5" x2="572.99" y2="622" stroke="#6a6a6a" stroke-width="0.8"/><line x1="576.32" y1="619.5" x2="576.32" y2="622" stroke="#6a6a6a" stroke-width="0.8"/><line x1="579.65" y1="617.5" x2="579.65" y2="622" stroke="#7a7a7a" stroke-width="0.8"/><line x1="582.98" y1="619.5" x2="582.98" y2="622" stroke="#6a6a6a" stroke-width="0.8"/><line x1="586.31" y1="619.5" x2="586.31" y2="622" stroke="#6a6a6a" stroke-width="0.8"/><line x1="589.64" y1="619.5" x2="589.64" y2="622" stroke="#6a6a6a" stroke-width="0.8"/><line x1="592.97" y1="619.5" x2="592.97" y2="622" stroke="#6a6a6a" stroke-width="0.8"/><line x1="596.30" y1="614.5" x2="596.30" y2="622" stroke="#8a8a8a" stroke-width="0.8"/><text x="596.30" y="613.2" font-size="6.2" fill="#bdbdbd" text-anchor="middle" font-family="Liberation Sans">00:11</text><line x1="599.63" y1="619.5" x2="599.63" y2="622" stroke="#6a6a6a" stroke-width="0.8"/><line x1="602.96" y1="619.5" x2="602.96" y2="622" stroke="#6a6a6a" stroke-width="0.8"/><line x1="606.29" y1="619.5" x2="606.29" y2="622" stroke="#6a6a6a" stroke-width="0.8"/><line x1="609.62" y1="619.5" x2="609.62" y2="622" stroke="#6a6a6a" stroke-width="0.8"/><line x1="612.95" y1="617.5" x2="612.95" y2="622" stroke="#7a7a7a" stroke-width="0.8"/><line x1="616.28" y1="619.5" x2="616.28" y2="622" stroke="#6a6a6a" stroke-width="0.8"/><line x1="619.61" y1="619.5" x2="619.61" y2="622" stroke="#6a6a6a" stroke-width="0.8"/><line x1="622.94" y1="619.5" x2="622.94" y2="622" stroke="#6a6a6a" stroke-width="0.8"/><line x1="626.27" y1="619.5" x2="626.27" y2="622" stroke="#6a6a6a" stroke-width="0.8"/><line x1="629.60" y1="614.5" x2="629.60" y2="622" stroke="#8a8a8a" stroke-width="0.8"/><text x="629.60" y="613.2" font-size="6.2" fill="#bdbdbd" text-anchor="middle" font-family="Liberation Sans">00:12</text><line x1="632.93" y1="619.5" x2="632.93" y2="622" stroke="#6a6a6a" stroke-width="0.8"/><line x1="636.26" y1="619.5" x2="636.26" y2="622" stroke="#6a6a6a" stroke-width="0.8"/><line x1="639.59" y1="619.5" x2="639.59" y2="622" stroke="#6a6a6a" stroke-width="0.8"/><line x1="642.92" y1="619.5" x2="642.92" y2="622" stroke="#6a6a6a" stroke-width="0.8"/><line x1="646.25" y1="617.5" x2="646.25" y2="622" stroke="#7a7a7a" stroke-width="0.8"/><line x1="649.58" y1="619.5" x2="649.58" y2="622" stroke="#6a6a6a" stroke-width="0.8"/><line x1="652.91" y1="619.5" x2="652.91" y2="622" stroke="#6a6a6a" stroke-width="0.8"/><line x1="656.24" y1="619.5" x2="656.24" y2="622" stroke="#6a6a6a" stroke-width="0.8"/><line x1="659.57" y1="619.5" x2="659.57" y2="622" stroke="#6a6a6a" stroke-width="0.8"/><line x1="662.90" y1="614.5" x2="662.90" y2="622" stroke="#8a8a8a" stroke-width="0.8"/><text x="662.90" y="613.2" font-size="6.2" fill="#bdbdbd" text-anchor="middle" font-family="Liberation Sans">00:13</text><line x1="666.23" y1="619.5" x2="666.23" y2="622" stroke="#6a6a6a" stroke-width="0.8"/><line x1="669.56" y1="619.5" x2="669.56" y2="622" stroke="#6a6a6a" stroke-width="0.8"/><line x1="672.89" y1="619.5" x2="672.89" y2="622" stroke="#6a6a6a" stroke-width="0.8"/><line x1="676.22" y1="619.5" x2="676.22" y2="622" stroke="#6a6a6a" stroke-width="0.8"/><line x1="679.55" y1="617.5" x2="679.55" y2="622" stroke="#7a7a7a" stroke-width="0.8"/><line x1="682.88" y1="619.5" x2="682.88" y2="622" stroke="#6a6a6a" stroke-width="0.8"/><line x1="686.21" y1="619.5" x2="686.21" y2="622" stroke="#6a6a6a" stroke-width="0.8"/><line x1="689.54" y1="619.5" x2="689.54" y2="622" stroke="#6a6a6a" stroke-width="0.8"/><line x1="692.87" y1="619.5" x2="692.87" y2="622" stroke="#6a6a6a" stroke-width="0.8"/><line x1="696.20" y1="614.5" x2="696.20" y2="622" stroke="#8a8a8a" stroke-width="0.8"/><text x="696.20" y="613.2" font-size="6.2" fill="#bdbdbd" text-anchor="middle" font-family="Liberation Sans">00:14</text><line x1="699.53" y1="619.5" x2="699.53" y2="622" stroke="#6a6a6a" stroke-width="0.8"/><line x1="702.86" y1="619.5" x2="702.86" y2="622" stroke="#6a6a6a" stroke-width="0.8"/><line x1="706.19" y1="619.5" x2="706.19" y2="622" stroke="#6a6a6a" stroke-width="0.8"/><line x1="709.52" y1="619.5" x2="709.52" y2="622" stroke="#6a6a6a" stroke-width="0.8"/><line x1="712.85" y1="617.5" x2="712.85" y2="622" stroke="#7a7a7a" stroke-width="0.8"/><line x1="716.18" y1="619.5" x2="716.18" y2="622" stroke="#6a6a6a" stroke-width="0.8"/><line x1="719.51" y1="619.5" x2="719.51" y2="622" stroke="#6a6a6a" stroke-width="0.8"/><line x1="722.84" y1="619.5" x2="722.84" y2="622" stroke="#6a6a6a" stroke-width="0.8"/><line x1="726.17" y1="619.5" x2="726.17" y2="622" stroke="#6a6a6a" stroke-width="0.8"/><line x1="729.50" y1="614.5" x2="729.50" y2="622" stroke="#8a8a8a" stroke-width="0.8"/><text x="729.50" y="613.2" font-size="6.2" fill="#bdbdbd" text-anchor="middle" font-family="Liberation Sans">00:15</text><line x1="732.83" y1="619.5" x2="732.83" y2="622" stroke="#6a6a6a" stroke-width="0.8"/><line x1="736.16" y1="619.5" x2="736.16" y2="622" stroke="#6a6a6a" stroke-width="0.8"/><line x1="739.49" y1="619.5" x2="739.49" y2="622" stroke="#6a6a6a" stroke-width="0.8"/><line x1="742.82" y1="619.5" x2="742.82" y2="622" stroke="#6a6a6a" stroke-width="0.8"/><line x1="746.15" y1="617.5" x2="746.15" y2="622" stroke="#7a7a7a" stroke-width="0.8"/><line x1="749.48" y1="619.5" x2="749.48" y2="622" stroke="#6a6a6a" stroke-width="0.8"/><line x1="752.81" y1="619.5" x2="752.81" y2="622" stroke="#6a6a6a" stroke-width="0.8"/><line x1="756.14" y1="619.5" x2="756.14" y2="622" stroke="#6a6a6a" stroke-width="0.8"/><line x1="759.47" y1="619.5" x2="759.47" y2="622" stroke="#6a6a6a" stroke-width="0.8"/><line x1="762.80" y1="614.5" x2="762.80" y2="622" stroke="#8a8a8a" stroke-width="0.8"/><text x="762.80" y="613.2" font-size="6.2" fill="#bdbdbd" text-anchor="middle" font-family="Liberation Sans">00:16</text><line x1="766.13" y1="619.5" x2="766.13" y2="622" stroke="#6a6a6a" stroke-width="0.8"/><line x1="769.46" y1="619.5" x2="769.46" y2="622" stroke="#6a6a6a" stroke-width="0.8"/><line x1="772.79" y1="619.5" x2="772.79" y2="622" stroke="#6a6a6a" stroke-width="0.8"/><line x1="776.12" y1="619.5" x2="776.12" y2="622" stroke="#6a6a6a" stroke-width="0.8"/><line x1="779.45" y1="617.5" x2="779.45" y2="622" stroke="#7a7a7a" stroke-width="0.8"/><line x1="782.78" y1="619.5" x2="782.78" y2="622" stroke="#6a6a6a" stroke-width="0.8"/><line x1="786.11" y1="619.5" x2="786.11" y2="622" stroke="#6a6a6a" stroke-width="0.8"/><line x1="789.44" y1="619.5" x2="789.44" y2="622" stroke="#6a6a6a" stroke-width="0.8"/><line x1="792.77" y1="619.5" x2="792.77" y2="622" stroke="#6a6a6a" stroke-width="0.8"/><line x1="796.10" y1="614.5" x2="796.10" y2="622" stroke="#8a8a8a" stroke-width="0.8"/><text x="796.10" y="613.2" font-size="6.2" fill="#bdbdbd" text-anchor="middle" font-family="Liberation Sans">00:17</text><line x1="799.43" y1="619.5" x2="799.43" y2="622" stroke="#6a6a6a" stroke-width="0.8"/><line x1="802.76" y1="619.5" x2="802.76" y2="622" stroke="#6a6a6a" stroke-width="0.8"/><line x1="806.09" y1="619.5" x2="806.09" y2="622" stroke="#6a6a6a" stroke-width="0.8"/><line x1="809.42" y1="619.5" x2="809.42" y2="622" stroke="#6a6a6a" stroke-width="0.8"/><line x1="812.75" y1="617.5" x2="812.75" y2="622" stroke="#7a7a7a" stroke-width="0.8"/><line x1="816.08" y1="619.5" x2="816.08" y2="622" stroke="#6a6a6a" stroke-width="0.8"/><line x1="819.41" y1="619.5" x2="819.41" y2="622" stroke="#6a6a6a" stroke-width="0.8"/><line x1="822.74" y1="619.5" x2="822.74" y2="622" stroke="#6a6a6a" stroke-width="0.8"/><line x1="826.07" y1="619.5" x2="826.07" y2="622" stroke="#6a6a6a" stroke-width="0.8"/><line x1="829.40" y1="614.5" x2="829.40" y2="622" stroke="#8a8a8a" stroke-width="0.8"/><text x="829.40" y="613.2" font-size="6.2" fill="#bdbdbd" text-anchor="middle" font-family="Liberation Sans">00:18</text><line x1="832.73" y1="619.5" x2="832.73" y2="622" stroke="#6a6a6a" stroke-width="0.8"/><line x1="836.06" y1="619.5" x2="836.06" y2="622" stroke="#6a6a6a" stroke-width="0.8"/><line x1="839.39" y1="619.5" x2="839.39" y2="622" stroke="#6a6a6a" stroke-width="0.8"/><line x1="842.72" y1="619.5" x2="842.72" y2="622" stroke="#6a6a6a" stroke-width="0.8"/><line x1="846.05" y1="617.5" x2="846.05" y2="622" stroke="#7a7a7a" stroke-width="0.8"/><line x1="849.38" y1="619.5" x2="849.38" y2="622" stroke="#6a6a6a" stroke-width="0.8"/><line x1="852.71" y1="619.5" x2="852.71" y2="622" stroke="#6a6a6a" stroke-width="0.8"/><line x1="856.04" y1="619.5" x2="856.04" y2="622" stroke="#6a6a6a" stroke-width="0.8"/><line x1="859.37" y1="619.5" x2="859.37" y2="622" stroke="#6a6a6a" stroke-width="0.8"/><line x1="862.70" y1="614.5" x2="862.70" y2="622" stroke="#8a8a8a" stroke-width="0.8"/><text x="862.70" y="613.2" font-size="6.2" fill="#bdbdbd" text-anchor="middle" font-family="Liberation Sans">00:19</text><line x1="866.03" y1="619.5" x2="866.03" y2="622" stroke="#6a6a6a" stroke-width="0.8"/><line x1="869.36" y1="619.5" x2="869.36" y2="622" stroke="#6a6a6a" stroke-width="0.8"/><line x1="872.69" y1="619.5" x2="872.69" y2="622" stroke="#6a6a6a" stroke-width="0.8"/><line x1="876.02" y1="619.5" x2="876.02" y2="622" stroke="#6a6a6a" stroke-width="0.8"/><line x1="879.35" y1="617.5" x2="879.35" y2="622" stroke="#7a7a7a" stroke-width="0.8"/><line x1="882.68" y1="619.5" x2="882.68" y2="622" stroke="#6a6a6a" stroke-width="0.8"/><line x1="886.01" y1="619.5" x2="886.01" y2="622" stroke="#6a6a6a" stroke-width="0.8"/><line x1="889.34" y1="619.5" x2="889.34" y2="622" stroke="#6a6a6a" stroke-width="0.8"/><line x1="892.67" y1="619.5" x2="892.67" y2="622" stroke="#6a6a6a" stroke-width="0.8"/><line x1="896.00" y1="614.5" x2="896.00" y2="622" stroke="#8a8a8a" stroke-width="0.8"/><text x="896.00" y="613.2" font-size="6.2" fill="#bdbdbd" text-anchor="middle" font-family="Liberation Sans">00:20</text><line x1="899.33" y1="619.5" x2="899.33" y2="622" stroke="#6a6a6a" stroke-width="0.8"/><line x1="902.66" y1="619.5" x2="902.66" y2="622" stroke="#6a6a6a" stroke-width="0.8"/><line x1="905.99" y1="619.5" x2="905.99" y2="622" stroke="#6a6a6a" stroke-width="0.8"/><line x1="909.32" y1="619.5" x2="909.32" y2="622" stroke="#6a6a6a" stroke-width="0.8"/><line x1="912.65" y1="617.5" x2="912.65" y2="622" stroke="#7a7a7a" stroke-width="0.8"/><line x1="915.98" y1="619.5" x2="915.98" y2="622" stroke="#6a6a6a" stroke-width="0.8"/><line x1="919.31" y1="619.5" x2="919.31" y2="622" stroke="#6a6a6a" stroke-width="0.8"/><line x1="922.64" y1="619.5" x2="922.64" y2="622" stroke="#6a6a6a" stroke-width="0.8"/><line x1="925.97" y1="619.5" x2="925.97" y2="622" stroke="#6a6a6a" stroke-width="0.8"/><line x1="929.30" y1="614.5" x2="929.30" y2="622" stroke="#8a8a8a" stroke-width="0.8"/><text x="929.30" y="613.2" font-size="6.2" fill="#bdbdbd" text-anchor="middle" font-family="Liberation Sans">00:21</text><line x1="932.63" y1="619.5" x2="932.63" y2="622" stroke="#6a6a6a" stroke-width="0.8"/><line x1="935.96" y1="619.5" x2="935.96" y2="622" stroke="#6a6a6a" stroke-width="0.8"/><line x1="939.29" y1="619.5" x2="939.29" y2="622" stroke="#6a6a6a" stroke-width="0.8"/><line x1="942.62" y1="619.5" x2="942.62" y2="622" stroke="#6a6a6a" stroke-width="0.8"/><line x1="945.95" y1="617.5" x2="945.95" y2="622" stroke="#7a7a7a" stroke-width="0.8"/><line x1="949.28" y1="619.5" x2="949.28" y2="622" stroke="#6a6a6a" stroke-width="0.8"/><line x1="952.61" y1="619.5" x2="952.61" y2="622" stroke="#6a6a6a" stroke-width="0.8"/><line x1="955.94" y1="619.5" x2="955.94" y2="622" stroke="#6a6a6a" stroke-width="0.8"/><rect x="218" y="606" width="7" height="17" fill="#2e2e2e"/><line x1="564.5" y1="620" x2="564.5" y2="747" stroke="#d03a2a" stroke-width="1.2"/><path d="M561,612.3 H568 V619.5 L564.5,622.5 L561,619.5 Z" fill="#f39b2a"/><polyline points="951,629 953.5,626.5 956,629" fill="none" stroke="#bbb" stroke-width="0.9"/><polyline points="951,740 953.5,742.5 956,740" fill="none" stroke="#bbb" stroke-width="0.9"/><polyline points="231,749 228.5,751 231,753" fill="none" stroke="#bbb" stroke-width="0.9"/><polyline points="943,749 945.5,751 943,753" fill="none" stroke="#bbb" stroke-width="0.9"/></svg></div>
<div class="a" style="left:959px;top:168px;width:221px;height:1px;background:#505050"></div><div class="a" style="left:959px;top:169px;width:221px;height:36px;background:#3d3d3d"></div><div class="a" style="left:959px;top:626px;width:221px;height:2px;background:#262626"></div><div class="a" style="left:959px;top:664px;width:221px;height:1px;background:#2a2a2a"></div><div class="a" style="left:1056px;top:648px;width:119px;height:13px;background:#272727"></div><div class="a" style="left:959px;top:738px;width:221px;height:17px;background:#3c3c3c"></div><div class="a" style="left:1007px;top:738px;width:40px;height:17px;background:#2e2e2e"></div><svg class="a" style="left:0;top:0" width="1200" height="778" viewBox="0 0 1200 778"><g transform="translate(970,147)"><rect x="0.5" y="0.5" width="10" height="10" fill="#2a2a2a" stroke="#d6d6d6"/><rect x="1.5" y="1.5" width="8" height="8" fill="none" stroke="#888" stroke-width="0.6"/><path d="M2.5,8 L4,3.5 L5.5,6 L7,3 L8.5,3 L8.5,8 Z" fill="#d6d6d6"/></g><g transform="translate(1002,147)"><rect x="3" y="3" width="6" height="8" fill="#d6d6d6"/><path d="M4,3 L6,0.5 L8,3 Z" fill="#d6d6d6"/><circle cx="1" cy="1" r="0.5" fill="#d6d6d6"/><circle cx="2.5" cy="0.5" r="0.5" fill="#d6d6d6"/><circle cx="1" cy="3" r="0.5" fill="#d6d6d6"/><path d="M6,5 L5,7.5" stroke="#333"/></g><path d="M971.5,169 L975.5,165 L979.5,169 Z" fill="#3d3d3d" stroke="#505050" stroke-width="0.8"/><rect x="970" y="168.5" width="11" height="2" fill="#3d3d3d"/><path d="M965.5,172.5 L969,175.5 L965.5,178.5 Z" fill="#e0e0e0"/><path d="M965.5,184.5 L969,187.5 L965.5,190.5 Z" fill="#e0e0e0"/><path d="M965.5,196.5 L969,199.5 L965.5,202.5 Z" fill="#e0e0e0"/><rect x="1158.5" y="62.1" width="6" height="6" fill="none" stroke="#d6d6d6" stroke-width="1"/><path d="M1157.5,63.1 V69.1 H1163.5" fill="none" stroke="#d6d6d6" stroke-width="1"/><path d="M1170.3,62.4 L1176.3,68.4 M1176.3,62.4 L1170.3,68.4" stroke="#d6d6d6" stroke-width="1.1"/><rect x="1158.5" y="125.2" width="6" height="6" fill="none" stroke="#d6d6d6" stroke-width="1"/><path d="M1157.5,126.2 V132.2 H1163.5" fill="none" stroke="#d6d6d6" stroke-width="1"/><path d="M1170.3,125.5 L1176.3,131.5 M1176.3,125.5 L1170.3,131.5" stroke="#d6d6d6" stroke-width="1.1"/><rect x="1158.5" y="634.1" width="6" height="6" fill="none" stroke="#d6d6d6" stroke-width="1"/><path d="M1157.5,635.1 V641.1 H1163.5" fill="none" stroke="#d6d6d6" stroke-width="1"/><path d="M1170.3,634.4 L1176.3,640.4 M1176.3,634.4 L1170.3,640.4" stroke="#d6d6d6" stroke-width="1.1"/><rect x="142.0" y="125.2" width="6" height="6" fill="none" stroke="#d6d6d6" stroke-width="1"/><path d="M141.0,126.2 V132.2 H147.0" fill="none" stroke="#d6d6d6" stroke-width="1"/><path d="M153.8,125.5 L159.8,131.5 M159.8,125.5 L153.8,131.5" stroke="#d6d6d6" stroke-width="1.1"/><path d="M970,650 V658.5 M965.8,654.2 H974.2" stroke="#e8e8e8" stroke-width="1.6"/><path d="M986.5,649.5 L995.5,658.5 M995.5,649.5 L986.5,658.5" stroke="#5e5e5e" stroke-width="1"/><path d="M1007,652 H1010 M1006.5,651.5 V658 H1013 V655 M1009,656 L1014,651 M1011.5,650.5 H1014.5 V653.5" fill="none" stroke="#5e5e5e" stroke-width="0.9"/><path d="M1027,658.5 H1036 M1028.5,657 L1034.5,651 L1036,652.5 L1030,658.5 Z" fill="none" stroke="#5e5e5e" stroke-width="0.9"/><line x1="1049.5" y1="648" x2="1049.5" y2="661" stroke="#262626"/><polyline points="1165.5,653 1168.5,656 1171.5,653" fill="none" stroke="#d6d6d6"/><polyline points="1174,77.5 1176,75.5 1178,77.5" fill="none" stroke="#aaa" stroke-width="0.8"/><polyline points="1174,111.5 1176,113.5 1178,111.5" fill="none" stroke="#aaa" stroke-width="0.8"/></svg>
<div class="a" style="left:0;top:0;width:1200px;height:755px;overflow:hidden"><div class="t" style="left:52.00px;top:21.18px;font-size:9.0px;line-height:12px;color:#d6d6d6;transform:scaleX(0.846);">Plik</div>
<div class="t" style="left:80.70px;top:21.18px;font-size:9.0px;line-height:12px;color:#d6d6d6;transform:scaleX(0.825);">Edycja</div>
<div class="t" style="left:118.70px;top:21.18px;font-size:9.0px;line-height:12px;color:#d6d6d6;transform:scaleX(0.822);">Scena</div>
<div class="t" style="left:155.30px;top:21.18px;font-size:9.0px;line-height:12px;color:#d6d6d6;transform:scaleX(0.875);">Element</div>
<div class="t" style="left:200.80px;top:21.18px;font-size:9.0px;line-height:12px;color:#d6d6d6;transform:scaleX(0.805);">Oś czasu</div>
<div class="t" style="left:247.00px;top:21.18px;font-size:9.0px;line-height:12px;color:#d6d6d6;transform:scaleX(0.878);">Widok</div>
<div class="t" style="left:285.60px;top:21.18px;font-size:9.0px;line-height:12px;color:#d6d6d6;transform:scaleX(0.886);">Pomoc</div>
<div class="t" style="left:1088.00px;top:20.22px;font-size:8.6px;line-height:12px;color:#e39a34;transform:scaleX(0.902);text-decoration:underline;">anula</div>
<div class="t" style="left:25.00px;top:58.98px;font-size:8px;line-height:12px;font-weight:bold;-webkit-text-stroke:0.05px currentColor;color:#e8e8e8;transform:scaleX(1.003);">Dokument</div>
<div class="t" style="left:34.70px;top:81.68px;font-size:9.0px;line-height:12px;color:#d0d0d0;transform:scaleX(0.874);">Tytuł</div>
<div class="t" style="left:34.70px;top:100.88px;font-size:9.0px;line-height:12px;color:#d0d0d0;transform:scaleX(0.843);">Opis</div>
<div class="t" style="left:113.30px;top:81.68px;font-size:9.0px;line-height:12px;color:#e0e0e0;transform:scaleX(0.844);">Boat&amp;Sea</div>
<div class="t" style="left:113.30px;top:100.88px;font-size:9.0px;line-height:12px;color:#e0e0e0;transform:scaleX(0.844);">Boat&amp;Sea</div>
<div class="t" style="left:24.60px;top:123.23px;font-size:8px;line-height:12px;font-weight:bold;-webkit-text-stroke:0.05px currentColor;color:#e8e8e8;transform:scaleX(0.934);">Sceny</div>
<div class="t" style="left:191.00px;top:121.83px;font-size:8px;line-height:12px;font-weight:bold;-webkit-text-stroke:0.05px currentColor;color:#ececec;transform:scaleX(0.941);">boat-sea</div>
<div class="t" style="left:253.70px;top:141.18px;font-size:9.0px;line-height:12px;color:#d4d4d4;transform:scaleX(0.863);">Rozmiar kontenera</div>
<div class="t" style="left:331.70px;top:140.98px;font-size:9.0px;line-height:12px;color:#e2e2e2;transform:scaleX(0.789);">1024px</div>
<div class="t" style="left:369.50px;top:140.98px;font-size:9.0px;line-height:12px;color:#c8c8c8;transform:scaleX(0.889);">x</div>
<div class="t" style="left:381.70px;top:140.98px;font-size:9.0px;line-height:12px;color:#e2e2e2;transform:scaleX(0.828);">576px</div>
<div class="t" style="left:589.20px;top:141.18px;font-size:9.0px;line-height:12px;color:#d4d4d4;transform:scaleX(0.825);">100%</div>
<div class="t" style="left:962.25px;top:122.74px;font-size:8.7px;line-height:12px;font-weight:bold;-webkit-text-stroke:0.05px currentColor;color:#e4e4e4;transform:scaleX(0.861);">Właściwości - Scene_1 (Scena)</div>
<div class="t" style="left:974.00px;top:169.69px;font-size:8.7px;line-height:12px;font-weight:bold;-webkit-text-stroke:0.05px currentColor;color:#e4e4e4;transform:scaleX(0.856);">Scena</div>
<div class="t" style="left:974.00px;top:181.19px;font-size:8.7px;line-height:12px;font-weight:bold;-webkit-text-stroke:0.05px currentColor;color:#e4e4e4;transform:scaleX(0.901);">Perspektywa</div>
<div class="t" style="left:974.00px;top:192.79px;font-size:8.7px;line-height:12px;font-weight:bold;-webkit-text-stroke:0.05px currentColor;color:#e4e4e4;transform:scaleX(0.876);">Efekty przejścia</div>
<div class="t" style="left:29.80px;top:213.18px;font-size:9.0px;line-height:12px;color:#ececec;transform:scaleX(0.771);">Scene_1</div>
<div class="t" style="left:150.80px;top:213.18px;font-size:9.0px;line-height:12px;color:#ececec;transform:scaleX(0.700);">1</div>
<div class="t" style="left:25.44px;top:590.23px;font-size:8px;line-height:12px;font-weight:bold;-webkit-text-stroke:0.05px currentColor;color:#ececec;transform:scaleX(1.020);">wave</div>
<div class="t" style="left:28.70px;top:607.98px;font-size:9.0px;line-height:12px;color:#6c6c6c;transform:scaleX(0.886);">Wyszukiwanie elementów i animacji</div>
<div class="t" style="left:106.50px;top:637.88px;font-size:9.0px;line-height:12px;color:#e0e0e0;transform:scaleX(0.826);">Działania</div>
<div class="t" style="left:45.50px;top:653.88px;font-size:9.0px;line-height:12px;color:#e4e4e4;transform:scaleX(0.752);">Scene_1</div>
<div class="t" style="left:45.50px;top:669.88px;font-size:9.0px;line-height:12px;color:#e4e4e4;transform:scaleX(0.825);">Sea sound</div>
<div class="t" style="left:45.50px;top:685.88px;font-size:9.0px;line-height:12px;color:#e4e4e4;transform:scaleX(0.783);">star_7</div>
<div class="t" style="left:45.50px;top:701.88px;font-size:9.0px;line-height:12px;color:#e4e4e4;transform:scaleX(0.783);">star_6</div>
<div class="t" style="left:45.50px;top:717.88px;font-size:9.0px;line-height:12px;color:#e4e4e4;transform:scaleX(0.783);">star_5</div>
<div class="t" style="left:45.50px;top:733.88px;font-size:9.0px;line-height:12px;color:#e4e4e4;transform:scaleX(0.783);">star_4</div>
<div class="t" style="left:45.50px;top:749.88px;font-size:9.0px;line-height:12px;color:#e4e4e4;transform:scaleX(0.783);">star_3</div>
<div class="t" style="left:497.90px;top:590.18px;font-size:11.3px;line-height:12px;color:#d8913a;transform:scaleX(0.797);-webkit-text-stroke:0;">0</div>
<div class="t" style="left:514.60px;top:590.18px;font-size:11.3px;line-height:12px;color:#d8913a;transform:scaleX(0.797);-webkit-text-stroke:0;">00</div>
<div class="t" style="left:538.75px;top:590.18px;font-size:11.3px;line-height:12px;color:#d8913a;transform:scaleX(0.761);-webkit-text-stroke:0;">10</div>
<div class="t" style="left:562.00px;top:590.18px;font-size:11.3px;line-height:12px;color:#d8913a;transform:scaleX(0.843);-webkit-text-stroke:0;">053</div>
<div class="t" style="left:507.55px;top:590.29px;font-size:11px;line-height:12px;color:#b89a78;transform:scaleX(0.870);-webkit-text-stroke:0;transform:none;">:</div>
<div class="t" style="left:530.90px;top:590.29px;font-size:11px;line-height:12px;color:#b89a78;transform:scaleX(0.870);-webkit-text-stroke:0;transform:none;">:</div>
<div class="t" style="left:554.20px;top:590.29px;font-size:11px;line-height:12px;color:#b89a78;transform:scaleX(0.870);-webkit-text-stroke:0;transform:none;">.</div>
<div class="t" style="left:962.40px;top:630.59px;font-size:8.7px;line-height:12px;font-weight:bold;-webkit-text-stroke:0.05px currentColor;color:#e4e4e4;transform:scaleX(0.870);">Funkcje</div>
<div class="t" style="left:1059.00px;top:648.48px;font-size:9.0px;line-height:12px;color:#e4e4e4;transform:scaleX(0.867);">Wszystkie funkcje</div>
<div class="t" style="left:967.00px;top:740.88px;font-size:9.0px;line-height:12px;color:#dcdcdc;transform:scaleX(0.853);">Elementy</div>
<div class="t" style="left:1013.60px;top:739.88px;font-size:9.0px;line-height:12px;color:#ececec;transform:scaleX(0.870);">Funkcje</div>
<div class="t" style="left:1054.60px;top:740.88px;font-size:9.0px;line-height:12px;color:#dcdcdc;transform:scaleX(0.885);">Punkty zmiany</div></div>
</body></html>
